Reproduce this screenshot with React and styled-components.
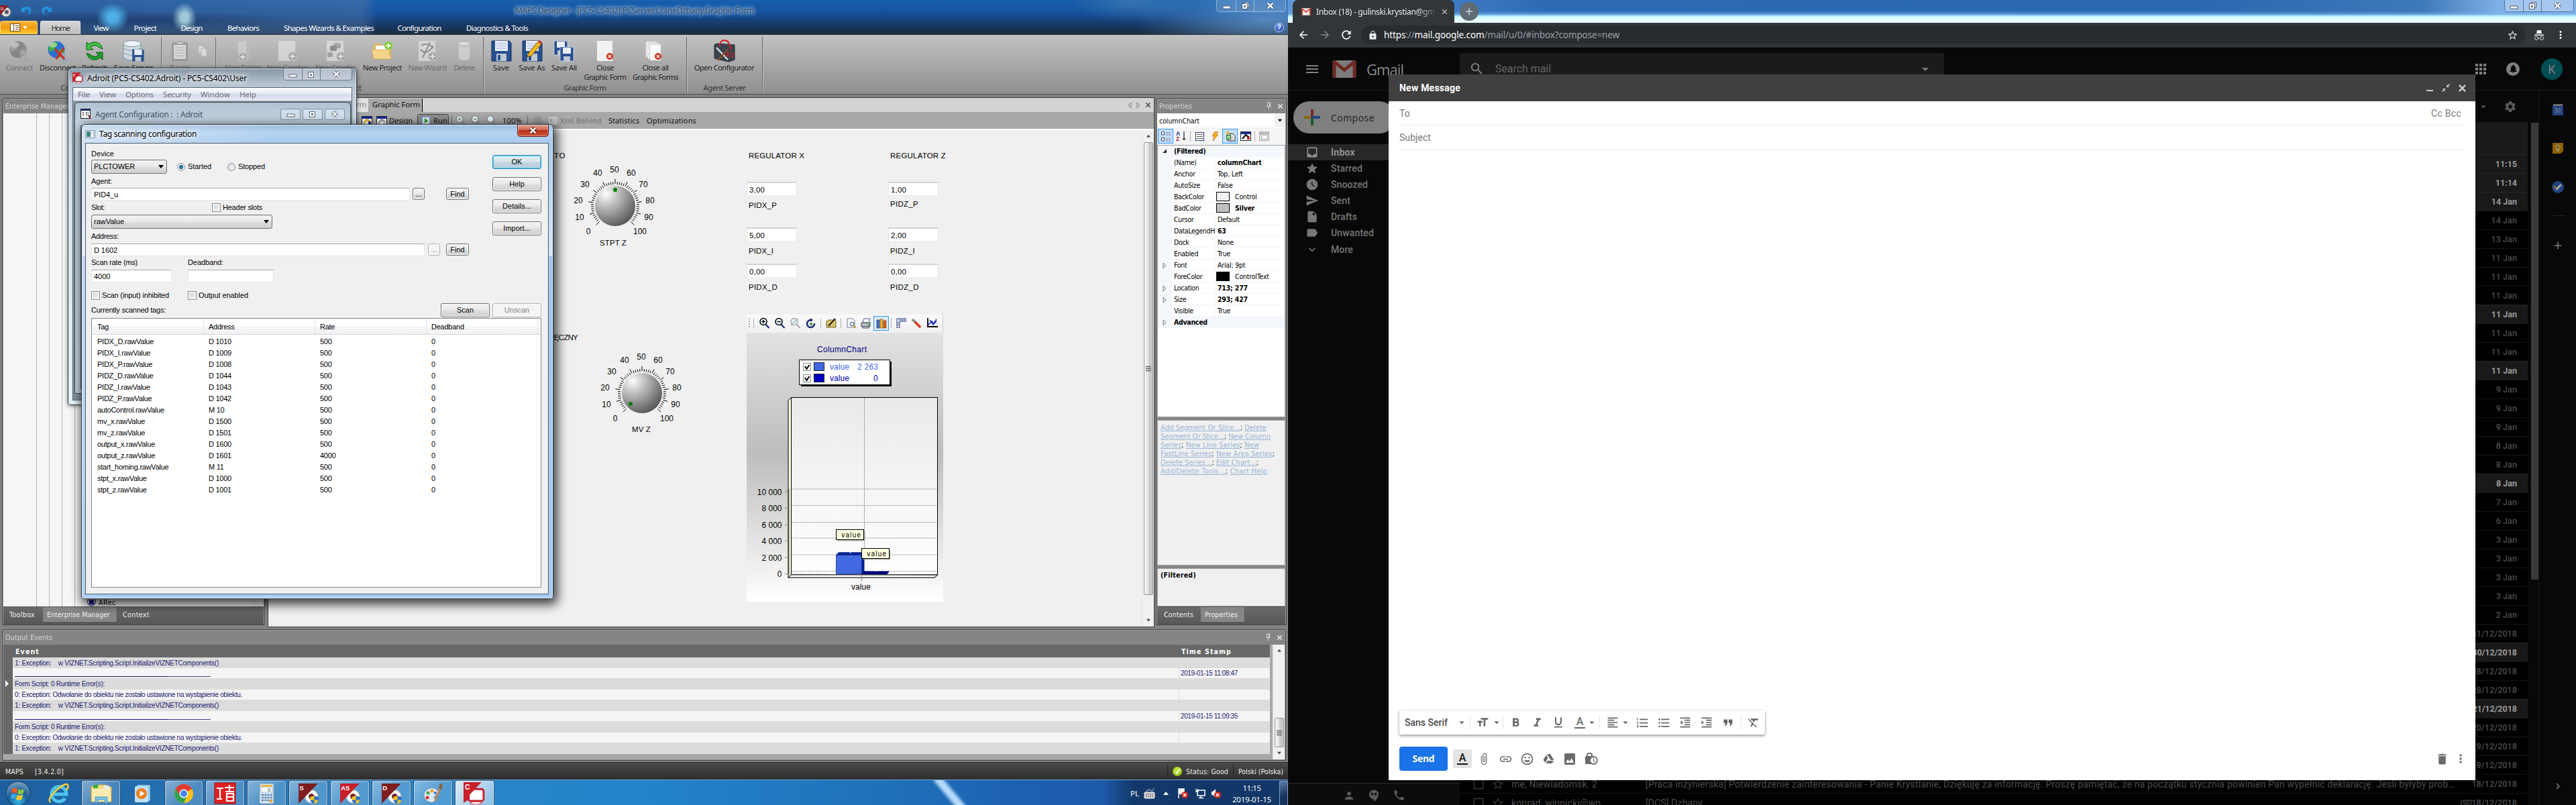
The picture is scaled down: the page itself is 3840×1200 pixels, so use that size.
import React, { useLayoutEffect, useRef, useState } from "react";
import styled, { createGlobalStyle, css } from "styled-components";
import {
  MdMenu, MdSearch, MdInbox, MdStar, MdWatchLater, MdSend, MdInsertDriveFile, MdLabel, MdExpandMore,
  MdApps, MdNotifications, MdSettings, MdArrowDropDown, MdFormatSize, MdFormatBold, MdFormatItalic,
  MdFormatUnderlined, MdFormatAlignLeft, MdFormatListNumbered, MdFormatListBulleted,
  MdFormatIndentDecrease, MdFormatIndentIncrease, MdFormatQuote, MdFormatClear, MdAttachFile,
  MdInsertLink, MdInsertEmoticon, MdDelete, MdMoreVert, MdPerson, MdPhone, MdStarBorder,
  MdCheckBoxOutlineBlank, MdLock, MdArrowBack, MdArrowForward, MdRefresh, MdClose, MdAdd, MdChevronRight,
} from "react-icons/md";

const tahoma = `"DejaVu Sans Condensed", "DejaVu Sans", sans-serif`;
const segoe = `"Noto Sans", "Open Sans", sans-serif`;
const arial = `"Liberation Sans", Arial, sans-serif`;

const Global = createGlobalStyle`
  * { box-sizing: border-box; }
  body { margin: 0; background: #000; }
  svg { display: block; flex: none; }
`;

const Desktop = styled.div`
  display: flex;
  width: 3840px;
  height: 1200px;
  overflow: hidden;
`;

/* ---------- text fitted to a fixed advance width ---------- */
const FitBox = styled.span`
  display: inline-block;
  flex: none;
  width: ${(p) => p.$w}px;
  white-space: pre;
`;
function Fit({ w, children }) {
  const ref = useRef(null);
  const [gap, setGap] = useState(0);
  useLayoutEffect(() => {
    const natural = ref.current.getBoundingClientRect().width;
    setGap((w - natural) / ref.current.textContent.length);
  }, []);
  return (
    <FitBox $w={w}>
      <span ref={ref} style={{ letterSpacing: gap }}>{children}</span>
    </FitBox>
  );
}

/* ================= left monitor: MAPS Designer ================= */
const Monitor = styled.div`
  position: relative;
  display: flex;
  flex-direction: column;
  width: 1920px;
  height: 1200px;
  overflow: hidden;
  background: #828282;
  font: 10.5px ${tahoma};
  color: #000;
`;
const GlassTop = styled.header`
  position: relative;
  height: 52px;
  flex: none;
  display: flex;
  flex-direction: column;
  background:
    radial-gradient(ellipse 200px 60px at 1890px 30px, rgba(110, 165, 215, 0.7), transparent),
    radial-gradient(ellipse 90px 30px at 1690px 4px, rgba(70, 130, 180, 0.6), transparent),
    radial-gradient(ellipse 24px 22px at 168px 26px, rgba(80, 180, 235, 0.95) 30%, transparent),
    radial-gradient(ellipse 18px 22px at 275px 26px, rgba(170, 215, 225, 0.9) 30%, transparent),
    radial-gradient(ellipse 260px 14px at 190px 30px, rgba(20, 45, 90, 0.55), transparent),
    linear-gradient(90deg, rgba(60, 100, 150, 0.55) 0, rgba(85, 120, 165, 0.45) 540px, transparent 562px),
    linear-gradient(#1960ae 0, #164f99 40%, #173763 75%, #1b2c40 100%);
  border-bottom: 1px solid #2c3238;
`;
const TitleRow = styled.div`
  height: 31px;
  display: flex;
  align-items: center;
`;
const QuickAccess = styled.div`
  display: flex;
  align-items: center;
  gap: 13px;
  width: 768px;
  height: 31px;
`;
const TitleText = styled.div`
  font: 12px ${segoe};
  color: #34465a;
  text-shadow: 0 0 3px #8db4dc, 0 0 4px #8db4dc, 0 0 6px #7ba7d6, 0 0 8px #7ba7d6, 0 0 10px #6c9bd0;
`;
const CaptionButtons = styled.div`
  display: flex;
  height: ${(p) => p.$h || 18}px;
  margin-left: auto;
  margin-right: ${(p) => p.$mr || 0}px;
  align-self: flex-start;
  border: 1px solid ${(p) => p.$line || "rgba(190,215,240,.6)"};
  border-top: 0;
  border-radius: 0 0 5px 5px;
  background: ${(p) => p.$bg || "rgba(255,255,255,.12)"};
`;
const CaptionButton = styled.div`
  width: ${(p) => p.$w}px;
  display: flex;
  align-items: center;
  justify-content: center;
  border-right: 1px solid ${(p) => p.$line || "rgba(190,215,240,.6)"};
  &:last-child { border-right: 0; }
`;
const TabRow = styled.nav`
  display: flex;
  height: 21px;
  align-items: stretch;
`;
const OfficeButton = styled.div`
  width: 56px;
  margin-right: 4px;
  display: flex;
  align-items: center;
  justify-content: center;
  gap: 4px;
  background: linear-gradient(#f7b541, #f09c0c 50%, #ffc832);
  border: 1px solid #ffd36b;
  border-radius: 3px 3px 0 0;
`;
const RibbonTab = styled.div`
  width: ${(p) => p.$w}px;
  display: flex;
  align-items: center;
  justify-content: center;
  font: 11.5px ${segoe};
  color: ${(p) => (p.$active ? "#333" : "#fff")};
  ${(p) => p.$active && css`
    background: linear-gradient(#d6d6d6, #bdbdbd);
    border: 1px solid #e6e6e6;
    border-bottom: 0;
    border-radius: 3px 3px 0 0;
  `}
`;
const HelpBall = styled.div`
  margin-left: auto;
  margin-right: 6px;
  align-self: center;
  width: 14px;
  height: 14px;
  border-radius: 50%;
  border: 1px solid #c9dbf5;
  background: radial-gradient(circle at 40% 30%, #6f9bf0, #1533a4);
  color: #fff;
  font: bold 10px/12px ${arial};
  text-align: center;
`;
const Ribbon = styled.div`
  display: flex;
  height: 89px;
  flex: none;
  background: linear-gradient(#c2c2c2, #8f8f8f);
  border-bottom: 1px solid #4b4b4b;
`;
const RibbonGroup = styled.div`
  display: flex;
  flex-direction: column;
  width: ${(p) => p.$w}px;
  margin: 3px 0 0;
  border-right: 1px solid #6b6b6b;
  box-shadow: 1px 0 0 #bcbcbc;
`;
const GroupButtons = styled.div`
  display: flex;
  height: 69px;
`;
const GroupLabel = styled.div`
  display: flex;
  justify-content: center;
  font: 11px/14px ${segoe};
  color: #333;
`;
const RibbonButton = styled.div`
  width: ${(p) => p.$w}px;
  flex: none;
  display: flex;
  flex-direction: column;
  align-items: center;
  padding-top: 4px;
  white-space: nowrap;
  text-align: center;
  font: 11px/14px ${segoe};
  color: ${(p) => (p.$off ? "#6b6b6b" : "#222")};
`;
const RibbonIcon = styled.div`
  height: 33px;
  margin-bottom: 2px;
  display: flex;
  align-items: center;
  opacity: ${(p) => (p.$off ? 0.6 : 1)};
  filter: ${(p) => (p.$off ? "grayscale(1)" : "none")};
`;

const Workspace = styled.div`
  display: flex;
  height: 796px;
  flex: none;
  align-items: flex-start;
`;
const Dock = styled.section`
  width: ${(p) => p.$w}px;
  height: 786px;
  margin: 5px 0 0 ${(p) => p.$ml}px;
  display: flex;
  flex-direction: column;
  border: 1px solid #4a4a4a;
  border-radius: 3px 3px 0 0;
  background: #858585;
  box-shadow: inset 0 0 0 1px #979797;
  overflow: hidden;
`;
const DockTitle = styled.div`
  height: ${(p) => p.$h || 22}px;
  flex: none;
  display: flex;
  align-items: center;
  justify-content: space-between;
  padding: 0 4px 0 4px;
  color: #d6d6d6;
`;
const DockTools = styled.span`
  display: flex;
  align-items: center;
  gap: 8px;
`;
const Tree = styled.div`
  flex: 1;
  margin: 0 1px;
  position: relative;
  display: flex;
  padding-left: 49px;
  background: #f6f6f6;
`;
const TreeLine = styled.div`
  width: 19px;
  border-left: 1px dotted #777;
`;
const TreeNode = styled.div`
  align-self: flex-end;
  display: flex;
  align-items: center;
  gap: 4px;
  height: 13px;
`;
const TreeScroll = styled.div`
  margin-left: auto;
  width: 14px;
  border-left: 1px solid #ddd;
  display: flex;
  align-items: flex-end;
  justify-content: center;
  padding-bottom: 12px;
`;
const DockTabs = styled.div`
  height: 27px;
  flex: none;
  display: flex;
  margin: 0 1px;
  background: linear-gradient(#696969, #575757);
  border-top: 1px solid #555;
`;
const DockTab = styled.div`
  width: ${(p) => p.$w}px;
  height: 22px;
  padding-left: ${(p) => p.$pl}px;
  display: flex;
  align-items: center;
  color: #f2f2f2;
  background: ${(p) => (p.$active ? "#868686" : "transparent")};
  border-right: 1px solid ${(p) => (p.$active ? "#555" : "transparent")};
`;

const Center = styled.main`
  width: 1322px;
  height: 790px;
  margin: 4px 0 0 4px;
  display: flex;
  flex-direction: column;
  border: 1px solid #3d3d3d;
  background: #f0f0f0;
`;
const FormTabs = styled.div`
  height: 21px;
  flex: none;
  display: flex;
  align-items: center;
  padding-left: 125px;
  background: #d4d4d4;
  font: 11.5px ${segoe};
`;
const FormTab = styled.div`
  height: 20px;
  align-self: flex-end;
  width: ${(p) => p.$w}px;
  padding-left: 6px;
  line-height: 18px;
  background: ${(p) => (p.$active ? "#a8a8a8" : "#e0e0e0")};
  color: ${(p) => (p.$active ? "#111" : "#888")};
  border-right: 1px solid ${(p) => (p.$active ? "#000" : "#e0e0e0")};
`;
const FormNav = styled.div`
  margin-left: auto;
  display: flex;
  align-items: center;
  gap: 6px;
  padding-right: 4px;
`;
const FormToolbar = styled.div`
  height: 25px;
  flex: none;
  display: flex;
  align-items: center;
  background: #a8a8a8;
  padding-left: 139px;
  font: 11px ${segoe};
  color: #111;
`;
const ToolIcon = styled.span`
  display: flex;
  width: ${(p) => p.$w}px;
  flex: none;
`;
const RunButton = styled.div`
  display: flex;
  align-items: center;
  gap: 5px;
  width: 47px;
  height: 20px;
  margin-left: 7px;
  padding-left: 6px;
  border: 1px solid #444;
  border-radius: 3px;
  background: #8e8e8e;
`;
const Muted = styled.span`
  color: ${(p) => p.$c || "#707070"};
  margin-left: ${(p) => p.$ml || 0}px;
`;
const CanvasRow = styled.div`
  flex: 1;
  display: flex;
  border-top: 2px solid #fff;
`;
const Canvas = styled.div`
  position: relative;
  flex: 1;
  margin-top: -2px;
  font: 11.5px ${arial};
`;
const Pin = styled.div`
  position: absolute;
  left: ${(p) => p.$x}px;
  top: ${(p) => p.$y}px;
  transform: translateY(-50%);
  line-height: 14px;
  white-space: nowrap;
`;
const NumberField = styled.div`
  width: 75px;
  height: 21px;
  padding-left: 3px;
  line-height: 20px;
  background: #fff;
  border: 1px solid #dfe3ea;
  border-top-color: #aaacb2;
`;
const ScrollTrack = styled.div`
  width: 18px;
  display: flex;
  flex-direction: column;
  align-items: center;
  margin-left: ${(p) => (p.$end ? "auto" : 0)};
  background: #f1f1f1;
  border-left: 1px solid #e2e2e2;
`;
const ScrollArrow = styled.div`
  height: 18px;
  display: flex;
  align-items: center;
  justify-content: center;
  margin-top: ${(p) => (p.$end ? "auto" : 0)};
`;
const ScrollThumb = styled.div`
  width: 14px;
  height: ${(p) => p.$h}px;
  margin-top: ${(p) => p.$mt || 0}px;
  display: flex;
  align-items: center;
  justify-content: center;
  border: 1px solid #979797;
  border-radius: 2px;
  background: linear-gradient(90deg, #f5f5f5, #e6e6e8 45%, #cdcdd1 55%, #c4c4ca);
`;
const Chart = styled.div`
  position: absolute;
  left: 713px;
  top: 277px;
  width: 293px;
  height: 429px;
`;
const ChartTools = styled.div`
  height: 27px;
  display: flex;
  align-items: center;
  padding: 0 0 2px 2px;
  background: linear-gradient(#fafafa, #f0f0f0);
  border-right: 1px solid #ccc;
`;
const ChartTool = styled.div`
  width: ${(p) => p.$w || 23}px;
  height: ${(p) => (p.$on ? 22 : 22)}px;
  display: flex;
  align-items: center;
  justify-content: center;
  border: ${(p) => (p.$on ? "1px solid #3399ff" : "0")};
  background: ${(p) => (p.$on ? "#dcebfa" : "none")};
`;
const ToolSep = styled.div`
  width: 1px;
  height: ${(p) => p.$h || 15}px;
  margin: 0 ${(p) => (p.$m === undefined ? 2 : p.$m)}px;
  background: ${(p) => p.$c || "#b0b0b0"};
`;

/* properties panel */
const Combo = styled.div`
  height: 21px;
  margin: 0 1px;
  display: flex;
  justify-content: space-between;
  align-items: center;
  padding-left: 3px;
  background: #fff;
`;
const ComboArrow = styled.span`
  width: 16px;
  height: 19px;
  display: flex;
  align-items: center;
  justify-content: center;
  background: #f0f0f0;
`;
const PropTools = styled.div`
  height: 27px;
  margin: 0 1px;
  display: flex;
  align-items: center;
  padding-left: 1px;
  background: #f4f4f4;
  border-bottom: 1px solid #a0a0a0;
`;
const PropTool = styled.div`
  width: ${(p) => p.$w || 23}px;
  height: 22px;
  display: flex;
  align-items: center;
  justify-content: center;
  border: 1px solid ${(p) => (p.$on ? "#3399ff" : "transparent")};
  background: ${(p) => (p.$on ? "#c4e0fb" : "none")};
`;
const PropGrid = styled.div`
  height: 405px;
  margin: 0 1px 4px;
  background: #fff;
  border: 1px solid #a0a0a0;
  border-top: 0;
`;
const PropRow = styled.div`
  height: 17px;
  display: grid;
  grid-template-columns: 21px 65px 1fr;
  background: ${(p) => (p.$head ? "#f4f7fc" : "#fff")};
`;
const PropGutter = styled.span`
  background: #f4f7fc;
  display: flex;
  align-items: center;
  justify-content: center;
`;
const PropName = styled.span`
  padding-left: 3px;
  line-height: 17px;
  white-space: nowrap;
  overflow: hidden;
  letter-spacing: -0.3px;
  font-weight: ${(p) => (p.$bold ? "bold" : "normal")};
  ${(p) => p.$bold && "overflow: visible;"}
  ${(p) => !p.$bold && "border-right: 1px solid #f0f3fa; border-bottom: 1px solid #f0f3fa;"}
`;
const PropValue = styled.span`
  padding-left: 3px;
  display: flex;
  align-items: center;
  white-space: nowrap;
  letter-spacing: -0.2px;
  font-weight: ${(p) => (p.$bold ? "bold" : "normal")};
  border-bottom: 1px solid #f0f3fa;
`;
const Swatch = styled.i`
  width: 20px;
  height: 14px;
  margin: 0 8px 0 -2px;
  border: 1px solid #000;
  background: ${(p) => p.$c};
`;
const Verbs = styled.div`
  height: 217px;
  margin: 0 1px 4px;
  padding: 4px 4px;
  border: 1px solid #a0a0a0;
  background: #f0f0f0;
  font: 10px/13.1px "DejaVu Sans", sans-serif;
  color: #222;
  white-space: nowrap;
  u { color: #98b4d6; }
`;
const VerbLine = styled.div`
  height: 13.1px;
`;
const HelpBox = styled.div`
  flex: 1;
  margin: 0 1px;
  padding: 3px 4px;
  background: #f0f0f0;
  border: 1px solid #a0a0a0;
  font-weight: bold;
`;

/* output panel */
const Output = styled.section`
  height: 196px;
  margin: 1px 3px 0 3px;
  flex: none;
  display: flex;
  flex-direction: column;
  border: 1px solid #4a4a4a;
  border-radius: 3px 3px 0 0;
  background: #858585;
  box-shadow: inset 0 0 0 1px #979797;
`;
const OutputBody = styled.div`
  height: 171px;
  margin: 0 1px;
  display: flex;
  background: #a8a8a8;
`;
const Gutter = styled.div`
  width: 14px;
  height: 163px;
  padding: 53px 0 0 3px;
  background: #686868;
`;
const EventTable = styled.div`
  width: 1874px;
`;
const EventHead = styled.div`
  height: 19px;
  display: grid;
  grid-template-columns: 1738px 1fr;
  align-items: center;
  background: #686868;
  color: #fff;
  font-weight: bold;
  padding-left: 4px;
`;
const EventRow = styled.div`
  height: ${(p) => p.$h}px;
  display: grid;
  grid-template-columns: 1738px 1fr;
  align-items: center;
  background: ${(p) => (p.$alt ? "#f5f5f5" : "#dcdcdc")};
  font: 10px ${arial};
  color: #191970;
`;
const EventCell = styled.div`
  height: 100%;
  display: flex;
  align-items: center;
  padding-left: 2px;
  border-left: 1px solid ${(p) => (p.$line ? "#dcdcdc" : "transparent")};
`;
const Rule = styled.div`
  align-self: flex-end;
  width: 292px;
  height: 1px;
  margin-bottom: 2px;
  background: linear-gradient(90deg, #191970 78%, #3f3f86 78%);
`;
const StatusBar = styled.footer`
  height: 26px;
  margin-top: 2px;
  flex: none;
  display: flex;
  align-items: center;
  padding: 0 7px 0 8px;
  gap: 17px;
  background: linear-gradient(#4b4b4b, #2e2e2e);
  border-top: 1px solid #2a2a2a;
  color: #eee;
`;
const StatusRight = styled.div`
  margin-left: auto;
  display: flex;
  align-items: center;
  gap: 6px;
`;
const StatusBall = styled.div`
  width: 14px;
  height: 14px;
  border-radius: 50%;
  background: radial-gradient(circle at 50% 35%, #c9f03a, #76ad0c);
  display: flex;
  align-items: center;
  justify-content: center;
`;
const Taskbar = styled.div`
  position: relative;
  height: 40px;
  flex: none;
  display: flex;
  align-items: center;
  background:
    linear-gradient(90deg, transparent 1642px, rgba(15, 45, 85, 0.75) 1690px),
    linear-gradient(90deg, #1d5f9f, #2c86c8 30%, #2383c9 50%, #1f72ba 68%, #1d5fb0 80%, #1c529c);
  border-top: 1px solid #6aa7d6;
  overflow: hidden;
`;
const TaskSlot = styled.div`
  width: ${(p) => p.$w}px;
  height: 39px;
  flex: none;
  margin-right: ${(p) => (p.$mr === undefined ? 3 : p.$mr)}px;
  display: flex;
  align-items: center;
  justify-content: center;
  ${(p) => p.$open && css`
    border: 1px solid rgba(10, 40, 80, 0.7);
    border-radius: 3px;
    box-shadow: inset 0 0 0 1px rgba(255, 255, 255, 0.5);
    background: linear-gradient(135deg, rgba(255, 255, 255, 0.45), rgba(255, 255, 255, 0.18) 60%);
  `}
  ${(p) => p.$front && css`
    background: linear-gradient(135deg, rgba(255, 255, 255, 0.85), rgba(200, 225, 245, 0.6));
  `}
`;
const Streak = styled.div`
  position: absolute;
  left: 1411px;
  top: -12px;
  width: 12px;
  height: 66px;
  transform: rotate(-40deg);
  background: #b7dbfb;
  filter: blur(2px);
`;
const Tray = styled.div`
  margin-left: auto;
  display: flex;
  align-items: center;
  height: 39px;
  color: #fff;
  font: 11.5px ${segoe};
`;
const Clock = styled.div`
  width: 78px;
  margin-left: 6px;
  display: flex;
  flex-direction: column;
  align-items: center;
  line-height: 17px;
`;
const ShowDesktop = styled.div`
  width: 13px;
  height: 38px;
  margin-left: 2px;
  border: 1px solid #7f9dbd;
  background: linear-gradient(160deg, #5c7ea6, #16345a 60%);
`;

/* ---------- floating windows ---------- */
const Win = styled.div`
  position: absolute;
  left: ${(p) => p.$x}px;
  top: ${(p) => p.$y}px;
  width: ${(p) => p.$w}px;
  height: ${(p) => p.$h}px;
  display: flex;
  flex-direction: column;
  padding: 0 6px 6px;
  border: 1px solid #2f3a46;
  border-radius: 6px 6px 4px 4px;
`;
const AdroitWin = styled(Win)`
  background: linear-gradient(#8896a4 0, #b7c5d3 24px, #c6d3df 60px, #d9e6ee 200px, #e6f5f8);
  box-shadow: inset 0 0 0 1px #e2edf5, 0 1px 6px rgba(0, 0, 0, 0.55);
`;
const DialogWin = styled(Win)`
  padding: 0 6px 6px 5px;
  background:
    linear-gradient(110deg, rgba(255, 255, 255, 0.45) 0, transparent 30%),
    linear-gradient(#9cbbdc 0, #b5d3f2 12px, #a9cbed 28px, #b5d3f2 60px, #d7e7f6 195px, #a3c5ea 196px, #a9cdf2);
  box-shadow: inset 0 0 0 1px #e4f2fd, 3px 5px 16px 3px rgba(0, 0, 0, 0.75);
`;
const WinTitle = styled.div`
  height: ${(p) => p.$h}px;
  flex: none;
  display: flex;
  align-items: center;
  gap: 6px;
  font: 12px ${segoe};
  color: ${(p) => p.$c || "#000"};
`;
const Glow = styled.span`
  text-shadow: 0 0 6px #fff, 0 0 8px #fff, 0 0 8px #fff;
`;
const RedClose = styled.div`
  width: 47px;
  height: 18px;
  margin-left: auto;
  align-self: flex-start;
  display: flex;
  align-items: center;
  justify-content: center;
  border: 1px solid #5b1a14;
  border-top: 0;
  border-radius: 0 0 5px 5px;
  background: linear-gradient(#e3a294, #cf6550 45%, #b8301b 50%, #d0553c);
  box-shadow: inset 0 0 0 1px rgba(255, 255, 255, 0.35);
`;
const AdroitBody = styled.div`
  flex: 1;
  display: flex;
  flex-direction: column;
  border: 1px solid #5b6670;
  background: #8b97a4;
`;
const MenuBar = styled.div`
  height: 19px;
  flex: none;
  display: flex;
  align-items: center;
  gap: 14px;
  padding-left: 7px;
  background: linear-gradient(#fdfdff, #e6eaf5 50%, #d3daed 52%, #e4e8f5);
  border-bottom: 1px solid #f5f5f5;
  font: 11.5px ${segoe};
  color: #6b6b6b;
`;
const ChildWin = styled.div`
  flex: 1;
  margin: 2px 1px 9px 2px;
  display: flex;
  flex-direction: column;
  padding: 0 8px 6px;
  border: 1px solid #3e4852;
  border-radius: 6px 6px 0 0;
  background: linear-gradient(#b0c1d2, #c6d5e3 30px, #c9d7e5);
`;
const ChildButtons = styled.div`
  display: flex;
  gap: 3px;
  margin-left: auto;
`;
const ChildButton = styled.div`
  width: 30px;
  height: 17px;
  display: flex;
  align-items: center;
  justify-content: center;
  border: 1px solid #7d90a8;
  border-radius: 2px;
  background: rgba(225, 235, 246, 0.6);
`;
const ChildBody = styled.div`
  flex: 1;
  border: 1px solid #5b6670;
  background: #f0f0f0;
`;

/* tag scanning dialog */
const DialogBody = styled.div`
  flex: 1;
  display: flex;
  flex-direction: column;
  padding: 9px 10px 9px 8px;
  border: 1px solid #4f5d6b;
  background: #f0f0f0;
  font: 11px/13px ${arial};
`;
const Upper = styled.div`
  display: flex;
  justify-content: space-between;
  height: 228px;
`;
const FormCol = styled.div`
  display: flex;
  flex-direction: column;
  width: 570px;
`;
const Line = styled.div`
  display: flex;
  align-items: center;
  height: ${(p) => p.$h}px;
  flex: none;
`;
const Gap = styled.span`
  width: ${(p) => p.$w}px;
  flex: none;
`;
const Select = styled.div`
  width: ${(p) => p.$w}px;
  height: 21px;
  flex: none;
  display: flex;
  align-items: center;
  justify-content: space-between;
  padding: 0 4px 0 3px;
  border: 1px solid #707070;
  border-radius: 3px;
  background: linear-gradient(#f2f2f2, #ebebeb 48%, #dddddd 52%, #cfcfcf);
`;
const Input = styled.div`
  width: ${(p) => p.$w}px;
  height: 19px;
  flex: none;
  padding-left: 3px;
  line-height: 18px;
  background: #fff;
  border: 1px solid #e2e6ec;
  border-top-color: #abadb3;
`;
const Radio = styled.i`
  width: 12px;
  height: 12px;
  margin-right: 4px;
  flex: none;
  border: 1px solid #8b8f94;
  border-radius: 50%;
  background: ${(p) => (p.$on ? "radial-gradient(circle, #3fb4e6 0, #12507c 35%, #e8f0f5 50%)" : "radial-gradient(circle at 60% 60%, #f6f6f6, #ccd0d4)")};
`;
const Check = styled.i`
  width: 13px;
  height: 13px;
  margin-right: 3px;
  flex: none;
  border: 1px solid #8e8f8f;
  box-shadow: inset 0 0 0 2px #f4f4f4;
  background: linear-gradient(135deg, #cbcfd5, #f6f6f6);
`;
const Button = styled.div`
  width: ${(p) => p.$w}px;
  height: ${(p) => p.$h || 21}px;
  flex: none;
  display: flex;
  align-items: center;
  justify-content: center;
  border: 1px solid ${(p) => (p.$off ? "#adb2b5" : p.$default ? "#3c7fb1" : "#707070")};
  border-radius: 3px;
  color: ${(p) => (p.$off ? "#838383" : "#000")};
  background: ${(p) => (p.$off ? "#f4f4f4" : p.$default ? "linear-gradient(#e5eff5,#d6e4ec 48%,#c3d5e0 52%,#b9cedb)" : "linear-gradient(#f2f2f2,#ebebeb 48%,#ddd 52%,#cfcfcf)")};
  box-shadow: inset 0 0 0 1px ${(p) => (p.$default ? "#46d7fb" : "#fcfcfc")};
`;
const ButtonCol = styled.div`
  display: flex;
  flex-direction: column;
  gap: 12px;
  padding-top: 8px;
`;
const ListCaption = styled.div`
  display: flex;
  align-items: center;
  height: 23px;
  gap: 4px;
`;
const ListView = styled.div`
  flex: 1;
  border: 1px solid #828790;
  background: #fff;
  padding: 1px;
`;
const ListHead = styled.div`
  display: grid;
  grid-template-columns: 166px 166px 166px 166px 1fr;
  height: 23px;
  margin-bottom: 2px;
  background: linear-gradient(#fff 45%, #f5f6f8 50%, #f1f2f4);
  border-bottom: 1px solid #d5d5d5;
`;
const ListRow = styled.div`
  display: grid;
  grid-template-columns: 166px 166px 166px 1fr;
  height: 17px;
`;
const ListCell = styled.span`
  display: flex;
  align-items: center;
  padding-left: 7px;
  white-space: nowrap;
  letter-spacing: -0.25px;
  border-right: 1px solid ${(p) => (p.$head ? "#dfe3e8" : "transparent")};
`;

/* ---------- small glyphs ---------- */
const Tri = ({ dir = "down", s = 6, c = "#000" }) => {
  const d = { down: "M0 1H8L4 6Z", up: "M0 6H8L4 1Z", right: "M2 0V8L7 4Z" }[dir];
  return <svg width={s} height={s} viewBox="0 0 8 8"><path d={d} fill={c} /></svg>;
};
const HollowTri = ({ left }) => (
  <svg width="7" height="10" viewBox="0 0 7 10"><path d={left ? "M5 1V9L1 5Z" : "M1 1V9L5 5Z"} fill="none" stroke="#777" /></svg>
);
const Cross = ({ c = "#fff", s = 9, edge, w = 2 }) => (
  <svg width={s} height={s} viewBox="0 0 10 10">
    {edge && <path d="M1.5 1.5L8.5 8.5M8.5 1.5L1.5 8.5" stroke={edge} strokeWidth={w + 2} />}
    <path d="M1.5 1.5L8.5 8.5M8.5 1.5L1.5 8.5" stroke={c} strokeWidth={w} />
  </svg>
);
const MinG = ({ e = "#4d5a6b" }) => (
  <svg width="13" height="10" viewBox="0 0 13 10"><rect x="1" y="5" width="11" height="4" fill="#fff" stroke={e} /></svg>
);
const MaxG = ({ e = "#4d5a6b", two }) => (
  <svg width="13" height="12" viewBox="0 0 13 12">
    {two && <rect x="4.5" y="0.5" width="7" height="8" fill="#fff" stroke={e} />}
    <rect x="1.5" y="2.5" width="8" height="8" fill="#fff" stroke={e} />
    <rect x="4.5" y="5.5" width="2" height="2" fill="none" stroke={e} />
  </svg>
);
const PinG = () => (
  <svg width="9" height="12" viewBox="0 0 9 12"><path d="M2.5 1V6M6.5 1V6M2 1H7M1 6.5H8M4.5 7V11M5.5 1V6" stroke="#d6d6d6" fill="none" /></svg>
);
const Grip = () => (
  <svg width="8" height="9" viewBox="0 0 8 9"><path d="M0 1.5H8M0 4.5H8M0 7.5H8" stroke="#666" strokeWidth="1.3" /></svg>
);

/* ---------- ribbon icons ---------- */
const Globe = ({ x }) => (
  <svg width="32" height="32" viewBox="0 0 32 32">
    <circle cx="14" cy="14" r="12.5" fill="#2d6fd0" />
    <path d="M5 6C9 1 15 2 16 5C17 8 12 9 12 12C12 15 7 14 5 18C2 14 2 10 5 6ZM18 14C22 12 26 13 26 16C25 22 21 25 18 26C16 22 15 17 18 14Z" fill="#3fae3a" />
    <path d="M19 18Q27 21 25 26T30 30" stroke="#8aa4bd" strokeWidth="4" fill="none" />
    <ellipse cx="9" cy="7" rx="6" ry="4" fill="#fff" opacity=".45" />
    {x && <path d="M12 13L26 28M25 12L14 28" stroke="#d5271c" strokeWidth="3" />}
  </svg>
);
const Refresh = () => (
  <svg width="30" height="32" viewBox="0 0 30 32" stroke="#0c5a13" strokeWidth="1">
    <path d="M3 3V14H13L9 10Q16 5 22 11L27 13Q24 1 12 3Q9 4 7 6Z" fill="#3dc43f" />
    <path d="M27 29V18H17L21 22Q14 27 8 21L3 19Q6 31 18 29Q21 28 23 26Z" fill="#1f9b2b" />
  </svg>
);
const Floppy = ({ s = 32, pencil }) => (
  <svg width={s} height={s} viewBox="0 0 32 32">
    <path d="M2 1H28L31 4V31H2Z" fill="#27508f" stroke="#152f5e" />
    <rect x="7" y="1" width="19" height="15" fill="#e9eef6" />
    <path d="M9 5H24M9 8.5H24M9 12H24" stroke="#9db3d6" />
    <rect x="9" y="20" width="15" height="11" fill="#bfc6d0" /><rect x="11" y="22" width="4" height="8" fill="#27508f" />
    {pencil && <path d="M9 25L11 19L25 2L30 6L15 23Z" fill="#f5b921" stroke="#6f4a0a" />}
    {pencil && <path d="M25 2L30 6L31 3L28 0Z" fill="#d33" />}
  </svg>
);
const DbSave = () => (
  <svg width="34" height="32" viewBox="0 0 34 32">
    <path d="M2 5V26Q14 34 28 26V5Z" fill="#cfdbe2" stroke="#7d929e" />
    <ellipse cx="15" cy="5" rx="13" ry="4.5" fill="#eef5f8" stroke="#7d929e" />
    <path d="M2 12Q15 19 28 12M2 19Q15 26 28 19" stroke="#7d929e" fill="none" />
    <g transform="translate(14 13) scale(.6)"><path d="M2 1H28L31 4V31H2Z" fill="#27508f" /><rect x="7" y="1" width="19" height="14" fill="#e9eef6" /><rect x="9" y="20" width="15" height="11" fill="#bfc6d0" /></g>
  </svg>
);
const SaveAll = () => (
  <svg width="32" height="32" viewBox="0 0 32 32">
    {[[1, 1], [10, 10]].map(([x, y]) => (
      <g key={x} transform={`translate(${x} ${y})`}><path d="M0 0H18L20 2V21H0Z" fill="#27508f" stroke="#e8eef8" strokeWidth=".7" /><rect x="4" y="1" width="12" height="9" fill="#e9eef6" /><rect x="5" y="14" width="10" height="7" fill="#bfc6d0" /></g>
    ))}
  </svg>
);
const Clipboard = () => (
  <svg width="28" height="32" viewBox="0 0 28 32"><rect x="2" y="3" width="24" height="28" rx="2" fill="#888" /><rect x="5" y="7" width="18" height="21" fill="#eee" /><path d="M7 11H21M7 15H21M7 19H21M7 23H21" stroke="#aaa" /><path d="M8 6L11 2H17L20 6Z" fill="#ddd" stroke="#777" /></svg>
);
const Pages = () => (
  <svg width="14" height="18" viewBox="0 0 14 18"><path d="M1 1H7L9 4V12H1Z" fill="#eee" stroke="#bbb" /><path d="M5 5H11L13 8V17H5Z" fill="#f4f4f4" stroke="#bbb" /></svg>
);
const PlusBall = ({ c = "#9d9d9d" }) => (
  <g><circle cx="23" cy="24" r="6.5" fill={c} stroke="#ddd" /><path d="M23 20V28M19 24H27" stroke="#fff" strokeWidth="2" /></g>
);
const SheetPlus = ({ inner }) => (
  <svg width="31" height="32" viewBox="0 0 31 32"><rect x="2" y="1" width="25" height="30" fill="#e9e9e9" />{inner}<PlusBall /></svg>
);
const GrayFolder = () => (
  <svg width="30" height="32" viewBox="0 0 30 32"><path d="M8 3L20 1V27L8 30Z" fill="#d8d8d8" /><path d="M20 1L27 3V27L20 30Z" fill="#bcbcbc" /><path d="M1 25L8 20V31Z" fill="#aaa" /><g transform="translate(-8 1)"><PlusBall /></g></svg>
);
const ProjectFolder = () => (
  <svg width="32" height="30" viewBox="0 0 32 30"><path d="M3 4H13L16 7H29V27H3Z" fill="#e0b65a" /><rect x="6" y="7" width="20" height="10" fill="#fff" /><path d="M0 13H24L30 27H3Z" fill="#f4d48a" stroke="#c89a3d" strokeWidth=".6" /><circle cx="25" cy="7" r="6" fill="#7fcf35" /><path d="M25 3.5V10.5M21.500 7H28.500" stroke="#fff" strokeWidth="2" /></svg>
);
const Bin = () => (
  <svg width="20" height="32" viewBox="0 0 20 32"><path d="M1 6V28Q10 33 19 28V6Z" fill="#dedede" stroke="#aaa" /><ellipse cx="10" cy="5" rx="9.500" ry="3.500" fill="#f0f0f0" stroke="#999" /><path d="M7 2Q10 -1 13 2" stroke="#999" fill="none" /></svg>
);
const CloseSheet = ({ many }) => (
  <svg width="30" height="32" viewBox="0 0 30 32">
    {many && <rect x="1" y="2" width="16" height="23" fill="#f4f4f4" stroke="#ccc" />}
    {many && <rect x="4" y="4" width="16" height="24" fill="#f4f4f4" stroke="#ccc" />}
    {many ? <rect x="7" y="6" width="16" height="24" fill="#fafafa" stroke="#ccc" /> : <rect x="3" y="1" width="23" height="30" fill="#f2f2f2" />}
    <circle cx={many ? 19 : 22} cy="24" r="5" fill="#d0301c" /><path d={many ? "M17 22L21 26M21 22L17 26" : "M20 22L24 26M24 22L20 26"} stroke="#fff" strokeWidth="1.6" />
  </svg>
);
const ToolBag = () => (
  <svg width="32" height="34" viewBox="0 0 32 34"><path d="M1 8L4 6L31 8V30L22 33L1 28Z" fill="#39434d" stroke="#20262c" /><path d="M8 10Q10 0 17 1Q24 2 25 15" stroke="#d21f2b" strokeWidth="2" fill="none" /><path d="M4 12L21 30" stroke="#ddd" strokeWidth="2.500" /><path d="M21 14L6 31" stroke="#8a4a2a" strokeWidth="2.500" /><text x="17" y="26" fontSize="10" fill="#d21f2b" fontFamily="Liberation Sans">AS</text></svg>
);
const AppLetter = ({ letter, dark, s = 32 }) => (
  <svg width={s} height={s} viewBox="0 0 30 30">
    <circle cx="19" cy="19" r="9" fill="#fff" stroke="#b9b9b9" strokeWidth="1.500" strokeDasharray={dark === "gear" ? "0" : "4 2"} />
    <circle cx="19" cy="19" r="4" fill="#7a2626" />
    <path d="M1 1H28L1 29Z" fill={dark ? "#7e1d1f" : "#c6202b"} />
    <text x="2" y="10" fontSize="9" fontWeight="bold" fill="#fff" fontFamily="Liberation Sans">{letter}</text>
    <g transform="translate(17 18)"><path d="M6 0L12 2Q12 9 6 12Q0 9 0 2Z" fill="#f5c518" /><path d="M6 0L12 2V6H6ZM0 6H6V12Q1 9 0 6Z" fill="#2d6fd0" /></g>
  </svg>
);
const AdroitIcon = ({ s = 16 }) => (
  <svg width={s} height={s} viewBox="0 0 16 16">
    <rect x="3.500" y="5" width="11" height="8.500" rx="1.500" fill="#fff" stroke="#c6202b" strokeWidth="1.400" />
    <path d="M0 0H13L4.500 9V12L0 15Z" fill="#c6202b" /><ellipse cx="9" cy="15" rx="4" ry="1" fill="#fff" stroke="#c6202b" strokeWidth=".6" />
    <text x="1" y="5.500" fontSize="5" fontWeight="bold" fill="#fff" fontFamily="Liberation Sans">C</text>
  </svg>
);
const FlipG = styled.g`
  transform-origin: center;
  transform: ${(p) => (p.$flip ? "scaleX(-1)" : "none")};
`;
const Arrow = ({ flip }) => (
  <svg width="17" height="16" viewBox="0 0 17 16"><FlipG $flip={flip}><path d="M1 2V10H8L5.500 7.500Q10 4 12 8Q13 11 10 15Q17 11 15 5Q11 -1 4 4Z" fill="#1f93dd" /></FlipG></svg>
);

const ribbonGroups = [
  { w: 241, label: "Connection", items: [
    { w: 58, off: 1, icon: <Globe />, t: ["Connect"], f: [40] },
    { w: 56, icon: <Globe x />, t: ["Disconnect"], f: [54] },
    { w: 54, icon: <Refresh />, t: ["Refresh"], f: [38] },
    { w: 62, icon: <DbSave />, t: ["Save Server"], f: [58] },
  ] },
  { w: 81, label: "Clipboard", items: [
    { w: 54, off: 1, icon: <Clipboard />, t: ["Paste"], f: [30] },
    { w: 14, off: 1, icon: <Pages />, t: [] },
  ] },
  { w: 399, label: "Project", items: [
    { w: 80, off: 1, icon: <GrayFolder />, t: ["New Folder"], f: [54] },
    { w: 52, off: 1, icon: <SheetPlus />, t: ["New Graphic"], f: [60] },
    { w: 92, off: 1, icon: <SheetPlus inner={<g fill="#999"><rect x="12" y="4" width="11" height="8" rx="2" /><rect x="7" y="8" width="10" height="8" rx="2" fill="#777" /><rect x="3" y="18" width="8" height="7" rx="2" /></g>} />, t: ["New Graphic"], f: [60] },
    { w: 48, icon: <ProjectFolder />, t: ["New Project"], f: [58] },
    { w: 86, off: 1, icon: <SheetPlus inner={<path d="M8 26L19 3M6 8Q16 2 24 12M5 14Q14 24 24 8" stroke="#777" strokeWidth="2" fill="none" />} />, t: ["New Wizard"], f: [57] },
    { w: 24, off: 1, icon: <Bin />, t: ["Delete"], f: [31] },
  ] },
  { w: 303, label: "Graphic Form", lw: 63, items: [
    { w: 52, icon: <Floppy />, t: ["Save"], f: [24] },
    { w: 40, icon: <Floppy pencil />, t: ["Save As"], f: [39] },
    { w: 56, icon: <SaveAll />, t: ["Save All"], f: [38] },
    { w: 66, icon: <CloseSheet />, t: ["Close", "Graphic Form"], f: [26, 63] },
    { w: 84, icon: <CloseSheet many />, t: ["Close all", "Graphic Forms"], f: [39, 68] },
  ] },
  { w: 113, label: "Agent Server", lw: 63, items: [
    { w: 111, icon: <ToolBag />, t: ["Open Configurator"], f: [89] },
  ] },
];

const ribbonTabs = [
  ["Home", 60, 27, true], ["View", 61, 22], ["Project", 71, 34], ["Design", 67, 32], ["Behaviors", 87, 47],
  ["Shapes Wizards & Examples", 168, 134], ["Configuration", 102, 65], ["Diagnostics & Tools", 130, 92],
];

const tags = [
  ["PIDX_D.rawValue", "D 1010", "500"], ["PIDX_I.rawValue", "D 1009", "500"], ["PIDX_P.rawValue", "D 1008", "500"],
  ["PIDZ_D.rawValue", "D 1044", "500"], ["PIDZ_I.rawValue", "D 1043", "500"], ["PIDZ_P.rawValue", "D 1042", "500"],
  ["autoControl.rawValue", "M 10", "500"], ["mv_x.rawValue", "D 1500", "500"], ["mv_z.rawValue", "D 1501", "500"],
  ["output_x.rawValue", "D 1600", "500"], ["output_z.rawValue", "D 1601", "4000"], ["start_homing.rawValue", "M 11", "500"],
  ["stpt_x.rawValue", "D 1000", "500"], ["stpt_z.rawValue", "D 1001", "500"],
];

const properties = [
  ["(Name)", "columnChart", 1], ["Anchor", "Top, Left"], ["AutoSize", "False"], ["BackColor", "Control", 0, "#f0f0f0"],
  ["BadColor", "Silver", 1, "#c0c0c0"], ["Cursor", "Default"], ["DataLegendH", "63", 1], ["Dock", "None"],
  ["Enabled", "True"], ["Font", "Arial; 9pt", 0, null, 1], ["ForeColor", "ControlText", 0, "#000"],
  ["Location", "713; 277", 1, null, 1], ["Size", "293; 427", 1, null, 1], ["Visible", "True"],
];

const exc1 = { t: "1: Exception:    w VIZNET.Scripting.Script.InitializeVIZNETComponents()", w: 304 };
const exc0 = { t: "0: Exception: Odwołanie do obiektu nie zostało ustawione na wystąpienie obiektu.", w: 339 };
const form = { t: "Form Script: 0 Runtime Error(s):", w: 134 };
const events = [
  { h: 16, ...exc1 }, { h: 15, rule: 1, ts: "2019-01-15 11:08:47" }, { h: 17, ...form }, { h: 15, ...exc0 }, { h: 17, ...exc1 },
  { h: 15, rule: 1, ts: "2019-01-15 11:09:35" }, { h: 17, ...form }, { h: 15, ...exc0 }, { h: 17, ...exc1 },
];

/* rotary knob with a 0..100 scale */
const knobLabels = [[-40, 38], [-53, 17], [-55, -8], [-45, -32], [-26, -49], [-1, -54], [24, -49], [42, -32], [52, -8], [50, 17], [37, 38]];
function Knob({ id, dot }) {
  const ticks = [];
  for (let i = 0; i <= 50; i++) {
    const a = ((-135 + i * 5.4) * Math.PI) / 180;
    const major = i % 5 === 0;
    const r1 = major ? 33 : 32;
    const r2 = major ? 40 : 36;
    ticks.push(<line key={i} x1={Math.sin(a) * r1} y1={-Math.cos(a) * r1} x2={Math.sin(a) * r2} y2={-Math.cos(a) * r2} />);
  }
  return (
    <svg width="140" height="130" viewBox="-70 -65 140 130">
      <defs><radialGradient id={id} cx=".27" cy=".2" r=".85"><stop offset="0" stopColor="#fff" /><stop offset=".3" stopColor="#c9c9c9" /><stop offset="1" stopColor="#5a5a5a" /></radialGradient></defs>
      <g stroke="#000" strokeWidth="1">{ticks}</g>
      <circle r="30" fill={`url(#${id})`} />
      <circle cx={dot[0]} cy={dot[1]} r="3" fill="#008000" />
      <g fontFamily="Liberation Sans" fontSize="12" textAnchor="middle">
        {knobLabels.map(([x, y], i) => <text key={i} x={x} y={y + 4}>{i * 10}</text>)}
      </g>
    </svg>
  );
}

function ColumnChart() {
  const ys = [[233, "10 000"], [257.5, "8 000"], [282.500, "6 000"], [306, "4 000"], [331, "2 000"], [355.500, "0"]];
  return (
    <svg width="293" height="401" viewBox="0 0 293 401" fontFamily="Liberation Sans" fontSize="12">
      <defs>
        <linearGradient id="cbg" x1="0" x2="0" y1="0" y2="1"><stop offset="0" stopColor="#e2e2e2" /><stop offset=".45" stopColor="#bdbdbd" /><stop offset="1" stopColor="#fff" /></linearGradient>
        <linearGradient id="wall" x1="0" x2="0" y1="0" y2="1"><stop offset="0" stopColor="#eaeaea" /><stop offset="1" stopColor="#fff" /></linearGradient>
      </defs>
      <rect width="293" height="401" fill="url(#cbg)" />
      <text x="105" y="29" textLength="74" fill="#000080">ColumnChart</text>
      <rect x="81" y="43" width="135" height="37" fill="#000" />
      <rect x="78.500" y="40.500" width="135" height="37" fill="#fff" stroke="#000" />
      {[[45, "#4169e1", "2 263", 165, 31], [62, "#0000c0", "0", 189, 6.500]].map(([y, c, v, vx, vw]) => (
        <g key={y}>
          <rect x="84.500" y={y + 0.500} width="11" height="11" fill="#fff" stroke="#888" />
          <path d={`M87 ${y + 5}L89.500 ${y + 9}L93.500 ${y + 3}`} stroke="#000" strokeWidth="2" fill="none" />
          <rect x="100.500" y={y - 0.500} width="15" height="12" fill={c} stroke="#222" />
          <text x="124" y={y + 10} textLength="29" fill={c}>value</text>
          <text x={vx} y={y + 10} textLength={vw} fill={c}>{v}</text>
        </g>
      ))}
      <path d="M62 101L66.500 96.500V360.500L62 365Z" fill="#ffffe0" stroke="#000" />
      <rect x="66.500" y="96.500" width="218" height="264" fill="url(#wall)" stroke="#000" />
      <path d="M66.500 360.500L62 365H280L284.500 361Z" fill="#fff" stroke="#444" strokeWidth="1.400" />
      <path d="M62.500 233V360" stroke="#555" strokeWidth="2" />
      <path d="M175.500 97V360" stroke="#999" strokeDasharray="3 1" />
      {ys.map(([y, l]) => (
        <g key={l}>
          <path d={`M67 ${y}H284`} stroke="#a5a5a5" strokeDasharray="3 1" />
          <path d={`M57 ${y + 4}H62`} stroke="#888" />
          <text x="52.500" y={y + 8.500} textAnchor="end">{l}</text>
        </g>
      ))}
      <path d="M133.500 331.500L137 327.500H175V356L171.500 360Z" fill="#00229a" stroke="#001a66" strokeWidth=".6" />
      <rect x="133.500" y="331.500" width="38" height="28.500" fill="#4169e1" stroke="#1c2f7a" strokeWidth=".8" />
      <path d="M171.500 360L175 355.500H213L209.500 360Z" fill="#00007e" />
      <path d="M154.500 308V329" stroke="#fff" />
      <path d="M192.500 336V356" stroke="#fff" />
      <g fontFamily="DejaVu Sans Condensed" fontSize="10.500">
        <rect x="135.500" y="295.500" width="41" height="15" fill="#999" opacity=".7" />
        <rect x="133.500" y="293.500" width="41" height="15" fill="#ffffe0" stroke="#000" />
        <text x="141" y="305" textLength="29">value</text>
        <rect x="173.500" y="323.500" width="41" height="15" fill="#999" opacity=".7" />
        <rect x="171.500" y="321.500" width="41" height="15" fill="#ffffe0" stroke="#000" />
        <text x="179" y="333" textLength="29">value</text>
      </g>
      <path d="M171.500 362V370" stroke="#888" />
      <text x="156" y="383" textLength="29">value</text>
    </svg>
  );
}

const mag = (s, c = "#000") => (
  <svg width="17" height="17" viewBox="0 0 17 17"><circle cx="7" cy="6.500" r="5" fill="#e4f6fa" stroke={c} strokeWidth="1.500" /><path d="M10.500 10.500L15.500 16" stroke={c === "#000" ? "#1a2a8a" : c} strokeWidth="2.200" /><path d={s} stroke={c} strokeWidth="1.500" /></svg>
);
const icoSketch = <svg width="16" height="16" viewBox="0 0 16 16"><path d="M1 5L4 3H15V14H1Z" fill="#d8c26a" stroke="#776020" /><path d="M4 12L14 1" stroke="#222" strokeWidth="2" /></svg>;
const icoPreview = <svg width="16" height="16" viewBox="0 0 16 16"><path d="M2 1H10L13 4V14H2Z" fill="#fff" stroke="#6b7c93" /><circle cx="9" cy="9" r="3" fill="#cfe6fa" stroke="#456" /><path d="M11 11L15 15" stroke="#c8962e" strokeWidth="2" /></svg>;
const icoPrint = <svg width="16" height="16" viewBox="0 0 16 16"><path d="M5 1H14L12 7H3Z" fill="#fff" stroke="#55a" /><path d="M1 7H14V13H1Z" fill="#b9bec8" stroke="#445" /><path d="M3 13H12V15H3Z" fill="#fff" stroke="#445" /><rect x="10" y="9" width="3" height="2" fill="#2db82d" /></svg>;
const icoBooks = <svg width="16" height="16" viewBox="0 0 16 16"><rect x="1" y="3" width="4" height="12" fill="#3d7ad1" stroke="#123" strokeWidth=".6" /><rect x="6" y="2" width="4" height="13" fill="#f0b428" stroke="#631" strokeWidth=".6" /><rect x="11" y="4" width="4" height="11" fill="#d8641e" stroke="#631" strokeWidth=".6" /></svg>;
const icoRuler = <svg width="15" height="15" viewBox="0 0 15 15"><path d="M1 15V1H15V5H5V15Z" fill="#dfe9f8" stroke="#24387c" /><path d="M6 2V4M9 2V4M12 2V4M2 7H4M2 10H4" stroke="#24387c" /></svg>;
const icoWrench = <svg width="15" height="15" viewBox="0 0 15 15"><path d="M2 2L7 7" stroke="#888" strokeWidth="3.500" /><path d="M7 7L13 13" stroke="#d43a1e" strokeWidth="3.500" strokeLinecap="round" /></svg>;
const icoLines = <svg width="17" height="15" viewBox="0 0 17 15"><path d="M2 0V13H17" stroke="#000" strokeWidth="1.800" fill="none" /><path d="M3 10L8 5L11 8L15 2M5 3L10 10L15 5" stroke="#2436c8" strokeWidth="1.600" fill="none" /></svg>;
const icoRotate = <svg width="16" height="16" viewBox="0 0 16 16"><path d="M8 3A5.500 5.500 0 1 0 13 8" stroke="#1d2b7a" strokeWidth="2.500" fill="none" /><path d="M7 0V6L11 3Z" fill="#1d2b7a" /><circle cx="8" cy="9" r="2" fill="#2e8b2e" /></svg>;
const icoForm = (a, b) => <svg width="16" height="14" viewBox="0 0 16 14"><rect x=".5" y=".5" width="15" height="13" fill="#fff" stroke="#223" /><rect x="1" y="1" width="14" height="3" fill="#1a2a9a" /><path d="M3 11L8 5L13 9" stroke={a} strokeWidth="2.500" fill="none" /><rect x="10" y="8" width="4" height="4" fill={b} /></svg>;
const icoWizard = <svg width="16" height="16" viewBox="0 0 16 16"><path d="M4.500 4.500H12L15 7.500V15H4.500Z" fill="#fff" stroke="#222" /><path d="M6 8H13M6 10.500H13M6 13H13" stroke="#999" /><rect x="2.500" y="6.500" width="6" height="6" fill="#9fd08f" stroke="#1f6b2b" /><path d="M4 0V6M1 3H7M2 1L6 5M6 1L2 5" stroke="#e8b81e" /></svg>;
const icoCat = <svg width="16" height="17" viewBox="0 0 16 17"><path d="M1.500 1.500H5.500V6H1.500ZM1.500 10.500H5.500V15H1.500Z" fill="#fff" stroke="#446" /><path d="M8 3H15M8 6H15M8 12H15M8 15H15" stroke="#668" strokeDasharray="3 1" /></svg>;
const icoAZ = <svg width="15" height="20" viewBox="0 0 15 20"><text x="0" y="9" fontSize="8.500" fontWeight="bold" fill="#2638a8" fontFamily="Liberation Sans">A</text><text x="0" y="17" fontSize="8.500" fontWeight="bold" fill="#a82626" fontFamily="Liberation Sans">Z</text><path d="M12 3V15M10 13L12 16L14 13" stroke="#000" fill="none" /></svg>;
const icoList = <svg width="13" height="13" viewBox="0 0 13 13"><rect x=".5" y=".5" width="12" height="12" fill="#fff" stroke="#2b3b7b" /><path d="M2 3.500H11M2 6.500H11M2 9.500H11" stroke="#555" /></svg>;
const icoBolt = <svg width="11" height="14" viewBox="0 0 11 14"><path d="M5 0H10L7 5H10L2 14L4 7H1Z" fill="#f7a823" stroke="#b8641a" strokeWidth=".6" /></svg>;

/* ---------- Tag scanning dialog ---------- */
function TagDialog() {
  return (
    <DialogWin $x={121} $y={185} $w={704} $h={708}>
      <WinTitle $h={27}>
        <svg width="15" height="12" viewBox="0 0 15 12"><rect x=".5" y=".5" width="14" height="11" fill="#e8eef2" stroke="#8a98a4" /><rect x="2" y="2" width="6" height="8" fill="#3c8a7c" /><rect x="11" y="2" width="3" height="8" fill="#c9dbe6" /></svg>
        <Glow><Fit w={145}>Tag scanning configuration</Fit></Glow>
        <RedClose><Cross s={11} w={2.500} edge="#5b1a14" /></RedClose>
      </WinTitle>
      <DialogBody>
        <Upper>
          <FormCol>
            <Line $h={13}><Fit w={34}>Device</Fit></Line>
            <Line $h={25}>
              <Select $w={113}><Fit w={61}>PLCTOWER</Fit><Tri s={8} /></Select><Gap $w={15} />
              <Radio $on /><Fit w={35}>Started</Fit><Gap $w={24} /><Radio /><Fit w={40}>Stopped</Fit>
            </Line>
            <Line $h={18}><Fit w={31}>Agent:</Fit></Line>
            <Line $h={20}>
              <Input $w={475}><Fit w={36}>PID4_u</Fit></Input><Gap $w={4} /><Button $w={18} $h={18}>...</Button><Gap $w={32} /><Button $w={34} $h={18}>Find</Button>
            </Line>
            <Line $h={21}><Fit w={20}>Slot:</Fit><Gap $w={160} /><Check /><Fit w={59}>Header slots</Fit></Line>
            <Line $h={21}><Select $w={270}><Fit w={45}>rawValue</Fit><Tri s={8} /></Select></Line>
            <Line $h={22}><Fit w={41}>Address:</Fit></Line>
            <Line $h={18}>
              <Input $w={497}><Fit w={35}>D 1602</Fit></Input><Gap $w={5} /><Button $w={18} $h={18} $off>...</Button><Gap $w={9} /><Button $w={34} $h={18}>Find</Button>
            </Line>
            <Line $h={21}><Fit w={69}>Scan rate (ms)</Fit><Gap $w={75} /><Fit w={53}>Deadband:</Fit></Line>
            <Line $h={18}><Input $w={120}>4000</Input><Gap $w={24} /><Input $w={128} /></Line>
            <Line $h={40}><Check /><Fit w={100}>Scan (input) inhibited</Fit><Gap $w={28} /><Check /><Fit w={74}>Output enabled</Fit></Line>
          </FormCol>
          <ButtonCol>
            <Button $w={73} $default>OK</Button><Button $w={73}>Help</Button><Button $w={73}>Details...</Button><Button $w={73}>Import...</Button>
          </ButtonCol>
        </Upper>
        <ListCaption>
          <Fit w={111}>Currently scanned tags:</Fit><Gap $w={402} />
          <Button $w={73}>Scan</Button><Button $w={73} $off>Unscan</Button>
        </ListCaption>
        <ListView>
          <ListHead>{["Tag", "Address", "Rate", "Deadband"].map((h) => <ListCell $head key={h}>{h}</ListCell>)}</ListHead>
          {tags.map(([t, a, r]) => (
            <ListRow key={t}><ListCell>{t}</ListCell><ListCell>{a}</ListCell><ListCell>{r}</ListCell><ListCell>0</ListCell></ListRow>
          ))}
        </ListView>
      </DialogBody>
    </DialogWin>
  );
}

function AdroitWindow() {
  const e = "#5d6a7a";
  return (
    <AdroitWin $x={101} $y={101} $w={431} $h={503}>
      <WinTitle $h={28}>
        <AdroitIcon s={16} /><Glow><Fit w={238}>Adroit (PC5-CS402.Adroit) - PC5-CS402\User</Fit></Glow>
        <CaptionButtons $h={18} $line="#6d7c8c" $bg="rgba(230,238,246,.45)">
          <CaptionButton $w={28} $line="#6d7c8c"><MinG e={e} /></CaptionButton>
          <CaptionButton $w={27} $line="#6d7c8c"><MaxG e={e} /></CaptionButton>
          <CaptionButton $w={46} $line="#6d7c8c"><Cross edge={e} s={11} /></CaptionButton>
        </CaptionButtons>
      </WinTitle>
      <AdroitBody>
        <MenuBar>
          <Fit w={18}>File</Fit><Fit w={25}>View</Fit><Fit w={42}>Options</Fit><Fit w={42}>Security</Fit><Fit w={44}>Window</Fit><Fit w={25}>Help</Fit>
        </MenuBar>
        <ChildWin>
          <WinTitle $h={34} $c="#3f5064">
            <svg width="16" height="16" viewBox="0 0 16 16"><rect x=".5" y=".5" width="14" height="14" fill="#fff" stroke="#222" /><rect x="1" y="1" width="13" height="2" fill="#1a2a7a" /><path d="M3 6H6M8 6H12M3 9H6M8 9H12" stroke="#333" strokeWidth="1.500" strokeDasharray="2 1" /><path d="M12 10L15 15" stroke="#922" strokeWidth="2" /></svg>
            <Fit w={160}>Agent Configuration :  : Adroit</Fit>
            <ChildButtons>
              <ChildButton><MinG e={e} /></ChildButton><ChildButton><MaxG e={e} /></ChildButton><ChildButton><Cross edge={e} s={10} /></ChildButton>
            </ChildButtons>
          </WinTitle>
          <ChildBody />
        </ChildWin>
      </AdroitBody>
    </AdroitWin>
  );
}

/* ---------- taskbar icons ---------- */
const Orb = <svg width="38" height="38" viewBox="0 0 38 38"><defs><radialGradient id="orb" cx=".5" cy=".8" r=".8"><stop offset="0" stopColor="#35b5e8" /><stop offset=".5" stopColor="#1c5f96" /><stop offset="1" stopColor="#7ea6c4" /></radialGradient></defs><circle cx="19" cy="19" r="18" fill="url(#orb)" stroke="#16375a" /><path d="M10 12Q14 9 18 12L16.500 19Q13 16 9 19Z" fill="#f2592a" /><path d="M19.500 12.500Q24 15 28 12L26.500 19Q22 21.500 18 19Z" fill="#8cc63e" /><path d="M8.500 20.500Q12 18 16 20.500L14.500 27Q11 25 7.500 27Z" fill="#3fa9e8" /><path d="M17.500 21Q22 23 26 20.500L24.500 27.500Q20 30 16 27.500Z" fill="#fdc823" /></svg>;
const IE = <svg width="32" height="32" viewBox="0 0 32 32"><path d="M6 17H27A11 11 0 1 0 25 23" fill="none" stroke="#4cc3f1" strokeWidth="5" /><path d="M3 29Q-2 24 12 11Q26 -1 29 3Q31 6 27 11" fill="none" stroke="#f7cf3a" strokeWidth="2.500" /></svg>;
const Explorer = <svg width="34" height="32" viewBox="0 0 34 32"><path d="M2 5H11L13 3H24L26 6H32V28H2Z" fill="#f3dc87" stroke="#c9a94b" /><path d="M5 3H12V8H5Z" fill="#3fae3a" /><path d="M20 4H29V9H20Z" fill="#e9e9e9" /><path d="M3 9H31V28H3Z" fill="#f9ebae" /><path d="M8 30V21H26V30H22V25H12V30Z" fill="#7cc4ea" stroke="#4a93bd" /></svg>;
const Wmp = <svg width="26" height="28" viewBox="0 0 26 28"><rect x="4" y="1" width="20" height="24" rx="2" fill="#8fc3e8" /><rect x="1" y="3" width="20" height="24" rx="2" fill="#bfe0f5" /><circle cx="11" cy="14" r="8" fill="#f07d1a" /><path d="M8.500 9.500V18.500L16 14Z" fill="#fff" /></svg>;
const ChromeIcon = <svg width="30" height="30" viewBox="0 0 30 30"><circle cx="15" cy="15" r="14" fill="#fbc116" /><path d="M15 15L2.900 8A14 14 0 0 1 27.100 8Z" fill="#e33b2e" /><path d="M15 15L2.900 8A14 14 0 0 0 15 29L20 18Z" fill="#31a350" /><path d="M15 8.500H27.300A14 14 0 0 0 3 7.800L9.500 18Z" fill="#e33b2e" /><circle cx="15" cy="15" r="6.500" fill="#fff" /><circle cx="15" cy="15" r="5" fill="#4285f4" /></svg>;
const RedApp = <svg width="33" height="33" viewBox="0 0 33 33"><rect x="1" y="1" width="31" height="31" fill="#e02020" stroke="#a01010" /><path d="M4 9H14M9 9V25M4 25H12M16 8H30M23 4V14M17 14H30M19 17H29V28H19ZM19 22H29" stroke="#fff" strokeWidth="2.200" fill="none" /></svg>;
const Calc = <svg width="26" height="32" viewBox="0 0 26 32"><rect x="2" y="1" width="21" height="30" rx="2" fill="#d7e6f3" stroke="#7f9dbc" /><rect x="4" y="3" width="17" height="3" fill="#f0b43c" /><rect x="4" y="6" width="17" height="8" fill="#f5fafd" stroke="#9ab" strokeWidth=".6" /><text x="14" y="13" fontSize="8" fill="#345" fontFamily="Liberation Sans">0</text><path d="M5 18H21M5 22H21M5 26H21" stroke="#5c84b0" strokeWidth="2.500" strokeDasharray="3 1.300" /><rect x="17" y="25" width="4" height="4" fill="#f0a02c" /></svg>;
const Paint = <svg width="34" height="32" viewBox="0 0 34 32"><path d="M4 14Q10 5 20 9Q28 13 20 19Q16 21 20 25Q18 31 10 28Q1 24 4 14Z" fill="#dbe9f4" stroke="#88a" strokeWidth=".6" /><circle cx="9" cy="15" r="2.500" fill="#3fae3a" /><circle cx="15" cy="12" r="2.500" fill="#f4a020" /><circle cx="8" cy="22" r="2.500" fill="#d8341e" /><circle cx="20" cy="15" r="2" fill="#2d6fd0" /><path d="M29 3L20 27" stroke="#c9853d" strokeWidth="2.500" /><path d="M27 1L31 2L29 10L25 8Z" fill="#8a6238" /></svg>;

function MapsDesigner() {
  return (
    <Monitor>
      <GlassTop>
        <TitleRow>
          <QuickAccess>
            <svg width="18" height="20" viewBox="0 0 18 20"><circle cx="9" cy="12" r="7" fill="#ddd" stroke="#777" /><circle cx="10" cy="12" r="3" fill="#556" /><path d="M0 2H13L0 17Z" fill="#8c2024" /><text x="1" y="9" fontSize="6" fill="#fff" fontFamily="Liberation Sans">D</text></svg>
            <Arrow /><Arrow flip />
          </QuickAccess>
          <TitleText><Fit w={356}>MAPS Designer - [PC5-CS402] PCServer.CraneDzbany.Graphic Form</Fit></TitleText>
          <CaptionButtons $mr={3}>
            <CaptionButton $w={29}><MinG e="#44607c" /></CaptionButton>
            <CaptionButton $w={27}><MaxG e="#44607c" two /></CaptionButton>
            <CaptionButton $w={46}><Cross edge="#44607c" s={11} /></CaptionButton>
          </CaptionButtons>
        </TitleRow>
        <TabRow>
          <OfficeButton>
            <svg width="15" height="12" viewBox="0 0 15 12"><rect x=".5" y=".5" width="14" height="11" fill="#fff" stroke="#6b4c12" /><path d="M5.500 1V11M8 3.500H13M8 6H13M8 8.500H13" stroke="#6b4c12" /></svg>
            <Tri c="#fff" s={7} />
          </OfficeButton>
          {ribbonTabs.map(([t, w, f, a]) => <RibbonTab key={t} $w={w} $active={a}><Fit w={f}>{t}</Fit></RibbonTab>)}
          <HelpBall>?</HelpBall>
        </TabRow>
      </GlassTop>
      <Ribbon>
        {ribbonGroups.map((g, i) => (
          <RibbonGroup key={i} $w={g.w}>
            <GroupButtons>
              {g.items.map((b, k) => (
                <RibbonButton key={k} $w={b.w} $off={b.off}>
                  <RibbonIcon $off={b.off}>{b.icon}</RibbonIcon>
                  {b.t.map((line, n) => <Fit key={n} w={b.f[n]}>{line}</Fit>)}
                </RibbonButton>
              ))}
            </GroupButtons>
            <GroupLabel>{g.lw ? <Fit w={g.lw}>{g.label}</Fit> : g.label}</GroupLabel>
          </RibbonGroup>
        ))}
      </Ribbon>

      <Workspace>
        <Dock $w={392} $ml={3}>
          <DockTitle><Fit w={95}>Enterprise Manager</Fit></DockTitle>
          <Tree>
            <TreeLine /><TreeLine /><TreeLine /><TreeLine />
            <TreeNode>
              <svg width="13" height="12" viewBox="0 0 13 12"><circle cx="6.500" cy="5" r="6" fill="#dde" stroke="#1a1a8a" /><rect x="3" y="2" width="7" height="7" fill="#1a1a8a" /></svg>
              <Fit w={26}>ARec</Fit>
            </TreeNode>
            <TreeScroll><Tri s={7} c="#444" /></TreeScroll>
          </Tree>
          <DockTabs>
            <DockTab $w={59} $pl={9}><Fit w={38}>Toolbox</Fit></DockTab>
            <DockTab $w={111} $pl={6} $active><Fit w={94}>Enterprise Manager</Fit></DockTab>
            <DockTab $w={60} $pl={8}><Fit w={40}>Context</Fit></DockTab>
          </DockTabs>
        </Dock>

        <Center>
          <FormTabs>
            <FormTab $w={24}>rm</FormTab>
            <FormTab $w={81} $active><Fit w={71}>Graphic Form</Fit></FormTab>
            <FormNav><HollowTri left /><HollowTri /><Cross c="#444" w={1.500} /></FormNav>
          </FormTabs>
          <FormToolbar>
            <ToolIcon $w={22}>{icoForm("#d8b21e", "#2a2a8a")}</ToolIcon>
            <ToolIcon $w={19}>{icoForm("#999", "#ccc")}</ToolIcon>
            <Fit w={35}>Design</Fit>
            <RunButton><svg width="12" height="12" viewBox="0 0 12 12"><rect width="12" height="12" fill="#dce8f8" stroke="#2a5ac0" /><path d="M4 2V10L9 6Z" fill="#1f9b1f" /></svg><Fit w={21}>Run</Fit></RunButton>
            <ToolSep $m={4} $c="#666" />
            <ToolIcon $w={23}>{mag("M4.500 6.500H9.500M7 4V9", "#8b8b8b")}</ToolIcon>
            <ToolIcon $w={23}>{mag("M4.500 6.500H9.500", "#8b8b8b")}</ToolIcon>
            <ToolIcon $w={25}>{mag("", "#8b8b8b")}</ToolIcon>
            <Fit w={29}>100%</Fit>
            <ToolSep $m={8} $c="#666" />
            <ToolIcon $w={23}><svg width="15" height="12" viewBox="0 0 15 12"><path d="M1 1H11V11H1ZM1 4.500H11M1 8H11M4.500 1V11M8 1V11M12 8H15" stroke="#888" fill="none" /></svg></ToolIcon>
            <ToolIcon $w={15}><svg width="13" height="12" viewBox="0 0 13 12"><rect width="13" height="12" fill="#c4c4c4" /><path d="M2 3L5 5L2 7" stroke="#777" fill="none" /></svg></ToolIcon>
            <Muted $ml={2}><Fit w={62}>Xml Behind</Fit></Muted>
            <Muted $c="#111" $ml={10}><Fit w={46}>Statistics</Fit></Muted>
            <Muted $c="#111" $ml={11}><Fit w={74}>Optimizations</Fit></Muted>
          </FormToolbar>
          <CanvasRow>
            <Canvas>
              <Pin $x={426} $y={40}><Fit w={17}>TO</Fit></Pin>
              <Pin $x={447} $y={115}><Knob id="k1" dot={[0, -24]} /></Pin>
              <Pin $x={494} $y={170}><Fit w={40}>STPT Z</Fit></Pin>
              <Pin $x={418} $y={311}><Fit w={43}>RĘCZNY</Fit></Pin>
              <Pin $x={487} $y={394}><Knob id="k2" dot={[-17, 16]} /></Pin>
              <Pin $x={542} $y={448}><Fit w={28}>MV Z</Fit></Pin>
              <Pin $x={716} $y={40}><Fit w={83}>REGULATOR X</Fit></Pin>
              <Pin $x={927} $y={40}><Fit w={83}>REGULATOR Z</Fit></Pin>
              {[["3,00", 89.500], ["5,00", 157.500], ["0,00", 211.500]].map(([v, y]) => <Pin key={v} $x={713} $y={y}><NumberField><Fit w={23}>{v}</Fit></NumberField></Pin>)}
              {[["1,00", 89.500], ["2,00", 157.500], ["0,00", 211.500]].map(([v, y]) => <Pin key={v} $x={924} $y={y}><NumberField><Fit w={23}>{v}</Fit></NumberField></Pin>)}
              <Pin $x={716} $y={114}><Fit w={42}>PIDX_P</Fit></Pin>
              <Pin $x={716} $y={182}><Fit w={37}>PIDX_I</Fit></Pin>
              <Pin $x={716} $y={236}><Fit w={43}>PIDX_D</Fit></Pin>
              <Pin $x={927} $y={112}><Fit w={42}>PIDZ_P</Fit></Pin>
              <Pin $x={927} $y={182}><Fit w={37}>PIDZ_I</Fit></Pin>
              <Pin $x={927} $y={236}><Fit w={43}>PIDZ_D</Fit></Pin>
              <Chart>
                <ChartTools>
                  <svg width="4" height="15" viewBox="0 0 4 15"><path d="M2 0V15" stroke="#aaa" strokeWidth="2" strokeDasharray="2 2" /></svg>
                  <ToolSep $m={4} /><ChartTool>{mag("M4.500 6.500H9.500M7 4V9")}</ChartTool><ChartTool>{mag("M4.500 6.500H9.500")}</ChartTool>
                  <ChartTool>{mag("M2 12L12 2", "#aaa")}</ChartTool><ChartTool>{icoRotate}</ChartTool><ToolSep $m={3} />
                  <ChartTool>{icoSketch}</ChartTool><ToolSep $m={3} /><ChartTool>{icoPreview}</ChartTool><ChartTool $w={22}>{icoPrint}</ChartTool>
                  <ChartTool $on>{icoBooks}</ChartTool><ToolSep $m={3} /><ChartTool $w={22}>{icoRuler}</ChartTool><ChartTool>{icoWrench}</ChartTool><ChartTool $w={25}>{icoLines}</ChartTool>
                </ChartTools>
                <ColumnChart />
              </Chart>
            </Canvas>
            <ScrollTrack>
              <ScrollArrow><Tri dir="up" s={6} c="#444" /></ScrollArrow>
              <ScrollThumb $h={675}><Grip /></ScrollThumb>
              <ScrollArrow $end><Tri s={6} c="#444" /></ScrollArrow>
            </ScrollTrack>
          </CanvasRow>
        </Center>

        <Dock $w={195} $ml={2}>
          <DockTitle $h={22}><Fit w={49}>Properties</Fit><DockTools><PinG /><Cross c="#ddd" /></DockTools></DockTitle>
          <Combo><Fit w={60}>columnChart</Fit><ComboArrow><Tri s={6} /></ComboArrow></Combo>
          <PropTools>
            <PropTool $on>{icoCat}</PropTool><PropTool>{icoAZ}</PropTool><ToolSep $m={2} />
            <PropTool>{icoList}</PropTool><PropTool $w={22}>{icoBolt}</PropTool><PropTool $on>{icoWizard}</PropTool>
            <PropTool>{icoForm("#222", "#c22")}</PropTool><ToolSep $m={2} />
            <PropTool><svg width="15" height="14" viewBox="0 0 15 14"><rect x=".5" y=".5" width="14" height="13" fill="#ddd" stroke="#aaa" /><path d="M1 3H14" stroke="#aaa" strokeWidth="2" /><rect x="4" y="6" width="8" height="5" fill="#fff" stroke="#bbb" /></svg></PropTool>
          </PropTools>
          <PropGrid>
            <PropRow $head><PropGutter><svg width="7" height="7" viewBox="0 0 7 7"><path d="M6 0V6H0Z" fill="#333" /></svg></PropGutter><PropName $bold>(Filtered)</PropName></PropRow>
            {properties.map(([n, v, b, c, ex]) => (
              <PropRow key={n}>
                <PropGutter>{ex ? <HollowTri /> : null}</PropGutter>
                <PropName>{n === "DataLegendH" ? <Fit w={61}>{n}</Fit> : n}</PropName>
                <PropValue $bold={b}>{c && <Swatch $c={c} />}{v}</PropValue>
              </PropRow>
            ))}
            <PropRow $head><PropGutter><HollowTri /></PropGutter><PropName $bold>Advanced</PropName></PropRow>
          </PropGrid>
          <Verbs>
            <VerbLine><Fit w={158}><u>Add Segment Or Slice...</u>; <u>Delete</u></Fit></VerbLine>
            <VerbLine><Fit w={164}><u>Segment Or Slice...</u>; <u>New Column</u></Fit></VerbLine>
            <VerbLine><Fit w={147}><u>Series</u>; <u>New Line Series</u>; <u>New</u></Fit></VerbLine>
            <VerbLine><Fit w={170}><u>FastLine Series</u>; <u>New Area Series</u>;</Fit></VerbLine>
            <VerbLine><Fit w={146}><u>Delete Series...</u>; <u>Edit Chart...</u>;</Fit></VerbLine>
            <VerbLine><Fit w={159}><u>Add/Delete Tools...</u>; <u>Chart Help</u></Fit></VerbLine>
          </Verbs>
          <HelpBox><Fit w={53}>(Filtered)</Fit></HelpBox>
          <DockTabs>
            <DockTab $w={65} $pl={10}><Fit w={44}>Contents</Fit></DockTab>
            <DockTab $w={66} $pl={6} $active><Fit w={49}>Properties</Fit></DockTab>
          </DockTabs>
        </Dock>
      </Workspace>

      <Output>
        <DockTitle $h={22}><Fit w={70}>Output Events</Fit><DockTools><PinG /><Cross c="#ddd" /></DockTools></DockTitle>
        <OutputBody>
          <Gutter><svg width="6" height="10" viewBox="0 0 6 10"><path d="M0 0V10L5 5Z" fill="#fff" /></svg></Gutter>
          <EventTable>
            <EventHead><Fit w={36}>Event</Fit><Fit w={75}>Time Stamp</Fit></EventHead>
            {events.map((e, i) => (
              <EventRow key={i} $h={e.h} $alt={i % 2}>
                <EventCell>{e.rule ? <Rule /> : <Fit w={e.w}>{e.t}</Fit>}</EventCell>
                <EventCell $line={i % 2}>{e.ts && <Fit w={85}>{e.ts}</Fit>}</EventCell>
              </EventRow>
            ))}
          </EventTable>
          <ScrollTrack $end>
            <ScrollArrow><Tri dir="up" s={6} c="#444" /></ScrollArrow>
            <ScrollThumb $h={44} $mt={91}><Grip /></ScrollThumb>
            <ScrollArrow><Tri s={6} c="#444" /></ScrollArrow>
          </ScrollTrack>
        </OutputBody>
      </Output>

      <StatusBar>
        <Fit w={27}>MAPS</Fit><Fit w={43}>[3.4.2.0]</Fit>
        <StatusRight>
          <ToolSep $h={20} $c="#222" $m={1} />
          <StatusBall><svg width="9" height="9" viewBox="0 0 9 9"><path d="M1 5L3.500 8L8 1" stroke="#fff" strokeWidth="1.500" fill="none" /></svg></StatusBall>
          <Fit w={63}>Status: Good</Fit><ToolSep $h={20} $c="#222" $m={1} /><Fit w={67}>Polski (Polska)</Fit>
        </StatusRight>
      </StatusBar>

      <Taskbar>
        <Streak />
        <TaskSlot $w={54} $mr={4}>{Orb}</TaskSlot>
        <TaskSlot $w={60}>{IE}</TaskSlot>
        <TaskSlot $w={59} $open>{Explorer}</TaskSlot>
        <TaskSlot $w={60} $mr={2}>{Wmp}</TaskSlot>
        <TaskSlot $w={58} $open>{ChromeIcon}</TaskSlot>
        <TaskSlot $w={59} $open>{RedApp}</TaskSlot>
        <TaskSlot $w={59} $open>{Calc}</TaskSlot>
        <TaskSlot $w={59} $open><AppLetter letter="S" dark /></TaskSlot>
        <TaskSlot $w={59} $open><AppLetter letter="AS" /></TaskSlot>
        <TaskSlot $w={59} $open><AppLetter letter="D" dark="gear" /></TaskSlot>
        <TaskSlot $w={59} $open>{Paint}</TaskSlot>
        <TaskSlot $w={59} $open $front><AdroitIcon s={33} /></TaskSlot>
        <Tray>
          <Fit w={13}>PL</Fit><Gap $w={7} />
          <svg width="17" height="16" viewBox="0 0 17 16"><rect x="1" y="6" width="15" height="9" rx="1" fill="#ccc" stroke="#eee" /><path d="M3 9H14M3 12H14" stroke="#555" strokeDasharray="2 1" /><path d="M4 5Q7 0 10 3T15 0" stroke="#ddd" fill="none" /></svg>
          <Gap $w={12} /><Tri dir="up" c="#fff" s={8} /><Gap $w={13} />
          <svg width="17" height="17" viewBox="0 0 17 17"><path d="M2 1V16M3 2H10V9H3" stroke="#fff" strokeWidth="1.500" fill="#fff" /><circle cx="11" cy="11" r="5" fill="#d8281c" /><path d="M9 9L13 13M13 9L9 13" stroke="#fff" strokeWidth="1.500" /></svg>
          <Gap $w={9} />
          <svg width="16" height="16" viewBox="0 0 16 16"><rect x="4" y="3" width="11" height="8" fill="none" stroke="#fff" strokeWidth="1.500" /><path d="M9 11V14M6 14.500H13M2 1V5H5V1" stroke="#fff" strokeWidth="1.300" fill="none" /></svg>
          <Gap $w={7} />
          <svg width="17" height="17" viewBox="0 0 17 17"><path d="M2 6H4L8 2V15L4 11H2Z" fill="#fff" /><circle cx="11" cy="11" r="5" fill="#d8281c" /><path d="M9 9L13 13M13 9L9 13" stroke="#fff" strokeWidth="1.500" /></svg>
          <Clock><Fit w={27}>11:15</Fit><Fit w={58}>2019-01-15</Fit></Clock>
          <ShowDesktop />
        </Tray>
      </Taskbar>

      <AdroitWindow />
      <TagDialog />
    </Monitor>
  );
}

/* ================= right monitor: Chrome with Gmail ================= */
const ChromeWin = styled.div`
  width: 1920px;
  height: 1200px;
  display: flex;
  flex-direction: column;
  background: #080808;
  font-family: Roboto, "Noto Sans", sans-serif;
  overflow: hidden;
`;
const TabStrip = styled.div`
  height: 34px;
  flex: none;
  display: flex;
  align-items: flex-end;
  padding-left: 7px;
  background:
    linear-gradient(transparent 16px, rgba(120, 180, 240, 0.55) 21px, #b8f2ff 24px, #e6ffff 28px, #e8ffff 34px),
    linear-gradient(90deg, #5f9ad8, #2c6ab6 20%, #2a67b1 70%, #3d78b8 88%, #7fb0e6 94%);
`;
const BrowserTab = styled.div`
  width: 241px;
  height: 34px;
  display: flex;
  align-items: center;
  padding: 0 11px 0 13px;
  gap: 8px;
  background: #323639;
  border-radius: 8px 8px 0 0;
  color: #e8eaed;
  font: 12px ${segoe};
  white-space: nowrap;
`;
const TabTitle = styled.span`
  width: 178px;
  -webkit-mask-image: linear-gradient(90deg, #000 86%, rgba(0, 0, 0, 0.15));
  mask-image: linear-gradient(90deg, #000 86%, rgba(0, 0, 0, 0.15));
`;
const NewTab = styled.div`
  width: 28px;
  height: 28px;
  margin: 0 0 3px 8px;
  border-radius: 50%;
  display: flex;
  align-items: center;
  justify-content: center;
  background: #5f6a73;
  color: #cfd6dc;
`;
const AddressRow = styled.div`
  height: 37px;
  flex: none;
  display: flex;
  align-items: center;
  padding: 0 14px;
  background: #323639;
  border-bottom: 1px solid #282b2e;
  color: #fff;
`;
const Omnibox = styled.div`
  width: 1736px;
  height: 28px;
  margin: 0 13px 0 12px;
  display: flex;
  align-items: center;
  padding: 0 10px;
  border-radius: 14px;
  background: #282c2f;
  font: 13.5px ${segoe};
  color: #9aa0a6;
  b { font-weight: normal; color: #fff; }
`;
const PushEnd = styled.span`
  margin-left: auto;
  display: flex;
`;
const GmailPage = styled.div`
  position: relative;
  flex: 1;
  display: flex;
  flex-direction: column;
  background: #080808;
  min-height: 0;
`;
const GmailHeader = styled.header`
  height: 64px;
  flex: none;
  display: flex;
  align-items: center;
  padding-left: 24px;
  border-bottom: 1px solid #1b1b1b;
  color: #808080;
`;
const GmailWord = styled.span`
  margin-left: 15px;
  width: 139px;
  font: 22px "Open Sans", Roboto, sans-serif;
  color: #8a8a8a;
`;
const SearchBox = styled.div`
  width: 722px;
  height: 48px;
  display: flex;
  align-items: center;
  padding: 0 16px 0 14px;
  border-radius: 4px 4px 0 0;
  background: #1b1b1b;
  font-size: 16px;
  color: #666;
`;
const HeaderRight = styled.div`
  margin-left: auto;
  padding-right: 20px;
  display: flex;
  align-items: center;
`;
const BellBall = styled.div`
  width: 20px;
  height: 20px;
  margin: 0 22px 0 26px;
  border-radius: 50%;
  background: #808080;
  color: #080808;
  display: flex;
  align-items: center;
  justify-content: center;
`;
const Avatar = styled.div`
  width: 32px;
  height: 32px;
  border-radius: 50%;
  background: #004d55;
  color: #808080;
  font-size: 18px;
  line-height: 33px;
  text-align: center;
`;
const GmailMain = styled.div`
  flex: 1;
  display: flex;
  min-height: 0;
`;
const Sidebar = styled.nav`
  width: 256px;
  flex: none;
  display: flex;
  flex-direction: column;
  padding-top: 16px;
`;
const ComposeButton = styled.div`
  width: 152px;
  height: 48px;
  margin: 0 0 16px 8px;
  display: flex;
  align-items: center;
  gap: 16px;
  padding-left: 16px;
  border-radius: 24px;
  background: #7f7f7f;
  color: #202020;
  font: 14px "Open Sans", sans-serif;
`;
const NavItem = styled.div`
  height: 24px;
  flex: none;
  display: flex;
  align-items: center;
  gap: 18px;
  padding-left: 26px;
  background: ${(p) => (p.$active ? "#282828" : "transparent")};
  margin-top: ${(p) => p.$mt || 0}px;
  color: ${(p) => (p.$active ? "#909090" : "#777")};
  font-size: 14px;
  font-weight: ${(p) => (p.$active ? "bold" : 500)};
`;
const HangoutBar = styled.div`
  height: 33px;
  margin-top: auto;
  display: flex;
  align-items: center;
  gap: 19px;
  padding: 3px 0 0 82px;
  border-top: 1px solid #2a2a2a;
  background: #0c0c0c;
  color: #5a5a5a;
`;
const MailPane = styled.div`
  width: 1608px;
  flex: none;
  display: flex;
  flex-direction: column;
  min-height: 0;
`;
const MailTools = styled.div`
  height: 47px;
  flex: none;
  display: flex;
  align-items: center;
  justify-content: flex-end;
  gap: 21px;
  padding-right: 32px;
  color: #5a5a5a;
`;
const MailScroll = styled.div`
  flex: 1;
  min-height: 0;
  display: flex;
  overflow: hidden;
`;
const MailList = styled.div`
  width: 1592px;
`;
const CategoryTabs = styled.div`
  height: 48px;
  background: #1a1a1a;
`;
const MailRow = styled.div`
  height: 28px;
  display: flex;
  align-items: center;
  padding: 0 16px 0 18px;
  background: ${(p) => (p.$unread ? "#191919" : "#000")};
  border-top: 1px solid ${(p) => (p.$unread ? "#262626" : "#151515")};
  color: ${(p) => (p.$unread ? "#999" : "#4c4c4c")};
  font-size: 14px;
  white-space: nowrap;
`;
const Clip = styled.span`
  display: flex;
  margin: 0 -6px 0 auto;
  transform: rotate(90deg);
`;
const MailDate = styled.span`
  margin-left: ${(p) => (p.$clip ? "4px" : "auto")};
  font-size: 12.5px;
  letter-spacing: ${(p) => (p.$unread ? 0 : "0.1px")};
  font-weight: ${(p) => (p.$unread ? "bold" : 500)};
`;
const MailScrollbar = styled.div`
  width: 11px;
  height: 681px;
  margin: 1px 0 0 5px;
  background: #393939;
`;
const AppRail = styled.aside`
  flex: 1;
  border-left: 1px solid #191919;
  display: flex;
  flex-direction: column;
  align-items: center;
  padding: 20px 0 0 1px;
  color: #808080;
`;
const RailIcon = styled.div`
  height: 16px;
  margin-bottom: 42px;
  display: flex;
  align-items: center;
`;
const RailRule = styled.div`
  width: 20px;
  height: 1px;
  margin: -8px 0 35px;
  background: #222;
`;
const RailBottom = styled.div`
  margin-top: auto;
  margin-bottom: 19px;
`;

const ComposeWin = styled.section`
  position: absolute;
  left: 150px;
  top: 40px;
  width: 1620px;
  height: 1052px;
  display: flex;
  flex-direction: column;
  border-radius: 4px 4px 0 0;
  overflow: hidden;
  background: #fff;
`;
const ComposeHead = styled.div`
  height: 40px;
  flex: none;
  display: flex;
  align-items: center;
  justify-content: space-between;
  padding: 0 13px 0 16px;
  background: #404040;
  color: #fff;
  font-size: 14px;
  font-weight: bold;
`;
const ComposeTools = styled.span`
  display: flex;
  align-items: center;
  gap: 12px;
  color: #cfcfcf;
`;
const Field = styled.div`
  height: ${(p) => p.$h}px;
  flex: none;
  margin: 0 16px;
  display: flex;
  align-items: center;
  justify-content: space-between;
  padding-right: 5px;
  border-bottom: 1px solid #e8e8e8;
  color: #777;
  font-size: 14px;
`;
const FormatBar = styled.div`
  width: 545px;
  height: 36px;
  margin: auto 0 18px 16px;
  display: flex;
  align-items: center;
  padding-left: 8px;
  border-radius: 2px;
  background: #fff;
  box-shadow: 0 2px 4px rgba(0, 0, 0, 0.4), 0 0 2px rgba(0, 0, 0, 0.15);
  color: #666;
  font-size: 14px;
`;
const FontName = styled.span`
  color: #4a4a4a;
  font-weight: 500;
`;
const FmtCell = styled.div`
  width: ${(p) => p.$w || 32}px;
  flex: none;
  display: flex;
  align-items: center;
  justify-content: center;
`;
const Mirrored = styled.span`
  display: flex;
  transform: scaleX(-1);
`;
const FmtSep = styled.div`
  width: 1px;
  height: 20px;
  flex: none;
  background: #e4e4e4;
`;
const LetterA = styled.span`
  width: 16px;
  height: 17px;
  border-bottom: 2px solid currentColor;
  text-align: center;
  font: 500 16px/14px Roboto, sans-serif;
`;
const ActionRow = styled.div`
  height: 36px;
  flex: none;
  margin: 0 12px 14px 16px;
  display: flex;
  align-items: center;
  color: #6b6b6b;
`;
const SendButton = styled.div`
  width: 72px;
  height: 36px;
  margin-right: 8px;
  border-radius: 4px;
  background: #1a73e8;
  color: #fff;
  font: bold 14px/35px "Open Sans", sans-serif;
  letter-spacing: -0.3px;
  text-align: center;
`;
const FormatToggle = styled.div`
  width: 28px;
  height: 28px;
  margin-right: 2px;
  display: flex;
  align-items: center;
  justify-content: center;
  border-radius: 3px;
  background: #e3e3e3;
  color: #111;
`;
const ActionsEnd = styled.div`
  margin-left: auto;
  display: flex;
  align-items: center;
  gap: 7px;
`;

const Envelope = ({ w, h, dim }) => (
  <svg width={w} height={h} viewBox="0 0 36 27">
    <rect width="36" height="27" rx="2" fill={dim ? "#7c7c7c" : "#f2f2f2"} />
    <path d="M0 25V3L5 5V27H2Q0 27 0 25ZM36 25V3L31 5V27H34Q36 27 36 25Z" fill={dim ? "#6f2721" : "#c5352a"} />
    <path d="M1 1L18 15L35 1" fill="none" stroke={dim ? "#6f2721" : "#de483a"} strokeWidth="5" />
  </svg>
);

const dates = [
  ["11:15", 1], ["11:14", 1], ["14 Jan", 1], ["14 Jan"], ["13 Jan"], ["11 Jan"], ["11 Jan"], ["11 Jan"], ["11 Jan", 1],
  ["11 Jan"], ["11 Jan"], ["11 Jan", 1], ["9 Jan"], ["9 Jan"], ["9 Jan"], ["8 Jan"], ["8 Jan"], ["8 Jan", 1], ["7 Jan"],
  ["6 Jan"], ["3 Jan"], ["3 Jan"], ["3 Jan"], ["3 Jan"], ["2 Jan"], ["31/12/2018"], ["30/12/2018", 1], ["28/12/2018"],
  ["28/12/2018"], ["21/12/2018", 1], ["20/12/2018"], ["19/12/2018"], ["19/12/2018"], ["18/12/2018"], ["18/12/2018"],
];
const mails = {
  33: { from: "me, Niewiadomsk. 2", fw: 128, text: "[Praca inżynierska] Potwierdzenie zainteresowania - Panie Krystianie, Dziękuję za informację. Proszę pamiętać, że na początku stycznia powinien Pan wypełnić deklarację. Jesli byłyby prob…", tw: 1206 },
  34: { from: "konrad_winnicki@wp..", fw: 141, text: "[DCS] Dzbany", tw: 85, clip: true },
};

function Gmail() {
  return (
    <ChromeWin>
      <TabStrip>
        <BrowserTab>
          <Envelope w={14} h={11} />
          <TabTitle><Fit w={177}>Inbox (18) - gulinski.krystian@gm</Fit></TabTitle>
          <MdClose size={13} color="#cfd3d6" />
        </BrowserTab>
        <NewTab><MdAdd size={18} /></NewTab>
        <CaptionButtons $mr={3} $line="#51759f" $bg="rgba(190,215,245,.6)">
          <CaptionButton $w={28} $line="#51759f"><MinG /></CaptionButton>
          <CaptionButton $w={27} $line="#51759f"><MaxG two /></CaptionButton>
          <CaptionButton $w={47} $line="#51759f"><Cross edge="#4d5a6b" s={11} /></CaptionButton>
        </CaptionButtons>
      </TabStrip>
      <AddressRow>
        <MdArrowBack size={18} /><Gap $w={14} /><MdArrowForward size={18} color="#80868b" /><Gap $w={13} /><MdRefresh size={20} />
        <Omnibox>
          <MdLock size={15} color="#e8eaed" /><Gap $w={9} />
          <Fit w={351}><b>https</b>://<b>mail.google.com</b>/mail/u/0/#inbox?compose=new</Fit>
          <PushEnd><MdStarBorder size={17} color="#dfe1e5" /></PushEnd>
        </Omnibox>
        <svg width="16" height="15" viewBox="0 0 16 15"><path d="M5 0H11L12 5H4ZM1 6.500H15V8H1Z" fill="#fff" /><circle cx="4" cy="12" r="2.500" fill="none" stroke="#ddd" /><circle cx="12" cy="12" r="2.500" fill="none" stroke="#ddd" /><path d="M6.500 12H9.500" stroke="#ddd" /></svg>
        <Gap $w={15} /><MdMoreVert size={18} />
      </AddressRow>
      <GmailPage>
        <GmailHeader>
          <MdMenu size={24} /><Gap $w={18} /><Envelope w={36} h={26} dim />
          <GmailWord><Fit w={55}>Gmail</Fit></GmailWord>
          <SearchBox><MdSearch size={23} color="#808080" /><Gap $w={16} /><Fit w={83}>Search mail</Fit><PushEnd><MdArrowDropDown size={24} color="#777" /></PushEnd></SearchBox>
          <HeaderRight><MdApps size={24} /><BellBall><MdNotifications size={15} /></BellBall><Gap $w={10} /><Avatar>K</Avatar></HeaderRight>
        </GmailHeader>
        <GmailMain>
          <Sidebar>
            <ComposeButton>
              <svg width="24" height="24" viewBox="0 0 24 24"><path d="M10 0H14V12H10Z" fill="#7a2720" /><path d="M10 14H14V24H10Z" fill="#1a5a2c" /><path d="M12 10H24V14H10Z" fill="#234585" /><path d="M0 10H10V14H0Z" fill="#86660a" /></svg>
              <Fit w={65}>Compose</Fit>
            </ComposeButton>
            <NavItem $active><MdInbox size={20} /><Fit w={36}>Inbox</Fit></NavItem>
            <NavItem><MdStar size={20} /><Fit w={47}>Starred</Fit></NavItem>
            <NavItem><MdWatchLater size={20} /><Fit w={55}>Snoozed</Fit></NavItem>
            <NavItem><MdSend size={20} /><Fit w={29}>Sent</Fit></NavItem>
            <NavItem><MdInsertDriveFile size={20} /><Fit w={39}>Drafts</Fit></NavItem>
            <NavItem><MdLabel size={20} /><Fit w={64}>Unwanted</Fit></NavItem>
            <NavItem $mt={1}><MdExpandMore size={20} /><Fit w={33}>More</Fit></NavItem>
            <HangoutBar>
              <MdPerson size={18} />
              <svg width="18" height="18" viewBox="0 0 18 18"><circle cx="9" cy="7.500" r="7" fill="#5a5a5a" /><path d="M9 13V18Q13 16 15 11Z" fill="#5a5a5a" /><path d="M5 5H8V8L6.500 10V8H5ZM10 5H13V8L11.500 10V8H10Z" fill="#0c0c0c" /></svg>
              <MdPhone size={19} />
            </HangoutBar>
          </Sidebar>
          <MailPane>
            <MailTools><MdArrowDropDown size={18} /><MdSettings size={20} /></MailTools>
            <MailScroll>
              <MailList>
                <CategoryTabs />
                {dates.map(([d, unread], i) => {
                  const m = mails[i];
                  const clip = m && m.clip;
                  return (
                    <MailRow key={i} $unread={unread}>
                      {m && <><MdCheckBoxOutlineBlank size={20} color="#333" /><Gap $w={9} /><MdStarBorder size={20} color="#333" /><Gap $w={10} />
                        <Fit w={m.fw}>{m.from}</Fit><Gap $w={200 - m.fw} /><Fit w={m.tw}>{m.text}</Fit></>}
                      {clip && <Clip><MdAttachFile size={19} /></Clip>}
                      <MailDate $unread={unread} $clip={clip}>{d}</MailDate>
                    </MailRow>
                  );
                })}
              </MailList>
              <MailScrollbar />
            </MailScroll>
          </MailPane>
          <AppRail>
            <RailIcon><svg width="16" height="17" viewBox="0 0 16 17"><path d="M1 0H15V3H1Z" fill="#6b6b6b" /><rect y="3" width="16" height="14" fill="#22427e" /><text x="3" y="13" fontSize="9" fill="#999" fontFamily="Roboto">31</text></svg></RailIcon>
            <RailIcon><svg width="16" height="16" viewBox="0 0 16 16"><path d="M0 1Q0 0 1 0H16V12L12 16H0Z" fill="#8a6200" /><circle cx="8" cy="6.500" r="3.200" fill="none" stroke="#aaa" /><path d="M6.500 10V12H9.500V10" stroke="#aaa" fill="none" /></svg></RailIcon>
            <RailIcon><svg width="18" height="18" viewBox="0 0 18 18"><circle cx="9" cy="9" r="9" fill="#22427e" /><circle cx="4.500" cy="9" r="1.800" fill="#a07a10" /><path d="M7 12L13 6" stroke="#aaa" strokeWidth="3" strokeLinecap="round" /></svg></RailIcon>
            <RailRule />
            <MdAdd size={18} />
            <RailBottom><MdChevronRight size={18} /></RailBottom>
          </AppRail>
        </GmailMain>

        <ComposeWin>
          <ComposeHead>
            <Fit w={91}>New Message</Fit>
            <ComposeTools>
              <svg width="12" height="12" viewBox="0 0 12 12"><path d="M1 10H11" stroke="#cfcfcf" strokeWidth="2" /></svg>
              <svg width="12" height="12" viewBox="0 0 12 12"><path d="M7 1V5H11ZM5 11V7H1Z" fill="#cfcfcf" /><path d="M7.500 4.500L11.500 0.500M4.500 7.500L0.500 11.500" stroke="#cfcfcf" strokeWidth="1.500" /></svg>
              <Cross s={13} c="#cfcfcf" w={1.800} />
            </ComposeTools>
          </ComposeHead>
          <Field $h={36}><Fit w={16}>To</Fit><Fit w={45}>Cc Bcc</Fit></Field>
          <Field $h={36}><Fit w={47}>Subject</Fit></Field>
          <FormatBar>
            <FontName><Fit w={64}>Sans Serif</Fit></FontName><Gap $w={11} /><FmtCell $w={20}><MdArrowDropDown size={18} /></FmtCell><Gap $w={2} /><FmtSep />
            <FmtCell $w={36}><MdFormatSize size={20} /></FmtCell><FmtCell $w={6}><MdArrowDropDown size={18} /></FmtCell><Gap $w={6} /><FmtSep />
            <FmtCell $w={36}><MdFormatBold size={21} /></FmtCell><FmtCell $w={28}><MdFormatItalic size={21} /></FmtCell><FmtCell $w={36}><MdFormatUnderlined size={20} /></FmtCell>
            <FmtCell $w={28}><LetterA>A</LetterA></FmtCell><FmtCell $w={8}><MdArrowDropDown size={18} /></FmtCell><Gap $w={7} /><FmtSep />
            <FmtCell $w={37}><MdFormatAlignLeft size={20} /></FmtCell><FmtCell $w={1}><MdArrowDropDown size={18} /></FmtCell><Gap $w={9} />
            <FmtCell><MdFormatListNumbered size={21} /></FmtCell><FmtCell><MdFormatListBulleted size={21} /></FmtCell>
            <FmtCell><MdFormatIndentDecrease size={20} /></FmtCell><FmtCell><MdFormatIndentIncrease size={20} /></FmtCell>
            <FmtCell><MdFormatQuote size={22} /></FmtCell><Gap $w={3} /><FmtSep /><FmtCell $w={36}><MdFormatClear size={20} /></FmtCell>
          </FormatBar>
          <ActionRow>
            <SendButton>Send</SendButton>
            <FormatToggle><LetterA>A</LetterA></FormatToggle>
            <FmtCell><Mirrored><MdAttachFile size={19} /></Mirrored></FmtCell>
            <FmtCell><MdInsertLink size={21} /></FmtCell><FmtCell><MdInsertEmoticon size={21} /></FmtCell>
            <FmtCell><svg width="17" height="16" viewBox="0 0 17 16"><path d="M6 1H11L16.500 10H11.500ZM5 2.500L7.500 7L3.500 14L0.500 9.500ZM7 11H16L13.500 15H4.700Z" fill="#6b6b6b" /></svg></FmtCell>
            <FmtCell><svg width="16" height="17" viewBox="0 0 16 17"><rect width="16" height="17" rx="2" fill="#6b6b6b" /><path d="M2 14L5 9L7.500 12L11 7.500L14 14Z" fill="#fff" /></svg></FmtCell>
            <FmtCell><svg width="19" height="18" viewBox="0 0 19 18"><rect y="5" width="13" height="12" rx="1.500" fill="#6b6b6b" /><path d="M3 6V4A3 3 0 0 1 10 4V6" stroke="#6b6b6b" strokeWidth="2" fill="none" /><circle cx="12.500" cy="11.500" r="5.500" fill="#fff" stroke="#6b6b6b" strokeWidth="1.800" /><path d="M12.500 8V12L15 13.500" stroke="#6b6b6b" strokeWidth="1.300" fill="none" /></svg></FmtCell>
            <ActionsEnd><MdDelete size={21} /><MdMoreVert size={20} /></ActionsEnd>
          </ActionRow>
        </ComposeWin>
      </GmailPage>
    </ChromeWin>
  );
}

export default function App() {
  return (
    <Desktop>
      <Global />
      <MapsDesigner />
      <Gmail />
    </Desktop>
  );
}
